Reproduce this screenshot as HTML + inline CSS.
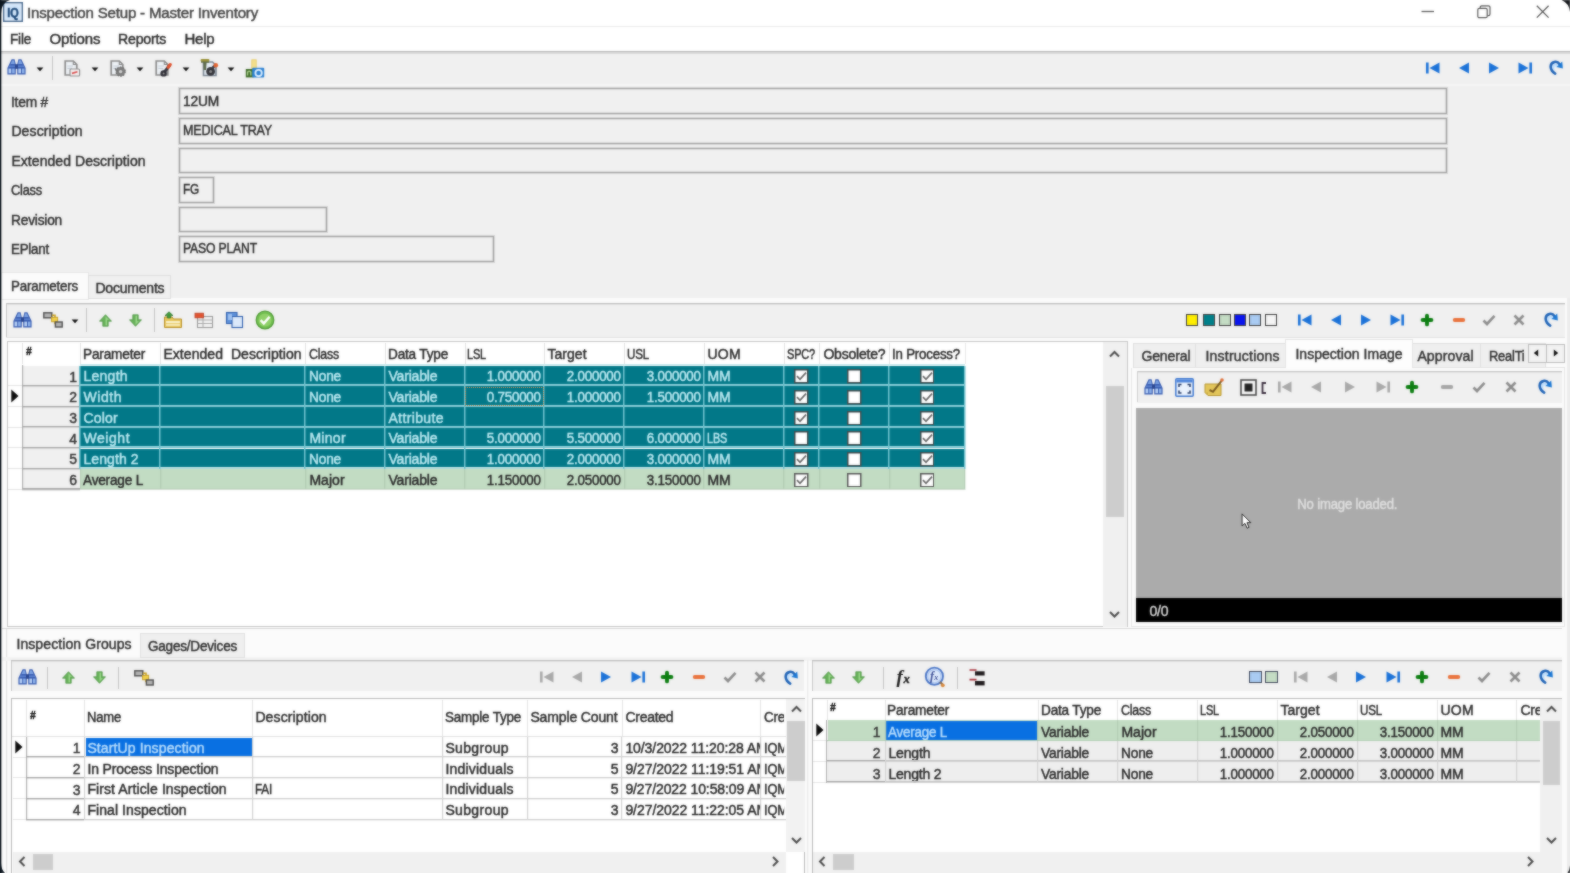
<!DOCTYPE html>
<html><head><meta charset="utf-8"><title>Inspection Setup - Master Inventory</title>
<style>
html,body{margin:0;padding:0;}
body{width:1570px;height:873px;overflow:hidden;background:#f0f0f0;font-family:"Liberation Sans", sans-serif;position:relative;}
#r{position:absolute;left:0;top:0;width:1570px;height:873px;overflow:hidden;will-change:transform;}
#f{left:0;top:0;width:1570px;height:873px;filter:url(#bl);}
#r div,#r span,#r svg{position:absolute;}
#r span{white-space:pre;-webkit-text-stroke:0.45px;}
</style></head><body>
<svg width="0" height="0" style="position:absolute"><filter id="bl" x="-2%" y="-2%" width="104%" height="104%" color-interpolation-filters="sRGB"><feGaussianBlur stdDeviation="0.8" result="b"/><feComposite in="b" in2="SourceGraphic" operator="arithmetic" k1="0" k2="0.55" k3="0.45" k4="0"/></filter></svg>
<div id="r"><div id="f">
<div style="left:-6px;top:-6px;width:1582px;height:885px;background:#f0f0f0;"></div>
<div style="left:-6px;top:-6px;width:1582px;height:57.5px;background:#ffffff;"></div>
<div style="left:-6px;top:26px;width:1582px;height:1px;background:#ebebeb;"></div>
<div style="left:-6px;top:51px;width:1582px;height:1px;background:#b8b8b8;"></div>
<div style="left:-6px;top:52px;width:1582px;height:1px;background:#b8b8b8;opacity:0.50;"></div>
<div style="left:-6px;top:53px;width:1582px;height:1px;background:#dcdcdc;"></div>
<div style="left:-6px;top:53.5px;width:1582px;height:31px;background:#f0f0f0;"></div>
<div style="left:-6px;top:84px;width:1582px;height:2px;background:#f6f6f6;"></div>
<svg style="left:2.5px;top:1.8px" width="20" height="20" viewBox="0 0 20 20"><rect x="0.8" y="0.8" width="18.4" height="18.4" fill="#d2e6fb" stroke="#4a6a8e" stroke-width="1.6"/><rect x="2" y="2" width="16" height="16" fill="none" stroke="#eaf3fd" stroke-width="0.8"/><text x="10" y="15.4" text-anchor="middle" font-family="Liberation Sans" font-weight="bold" font-size="13.5" fill="#1d4878" stroke="#1d4878" stroke-width="0.5" textLength="11.5" lengthAdjust="spacingAndGlyphs">IQ</text></svg>
<span style="left:27.40px;top:3.20px;font-size:15.5px;line-height:20px;color:#444;letter-spacing:-0.200px;transform:scaleX(0.9719);transform-origin:left center;">Inspection Setup - Master Inventory</span>
<svg style="left:1421px;top:5px" width="14" height="14" viewBox="0 0 14 14"><path d="M0.5 6.5 H13" stroke="#5c5c5c" stroke-width="1.3"/></svg>
<svg style="left:1477px;top:5px" width="14" height="14" viewBox="0 0 14 14"><rect x="0.8" y="3.3" width="9.4" height="9.4" rx="1.5" fill="none" stroke="#5c5c5c" stroke-width="1.2"/><path d="M3.2 3.2 V2.4 a1.6 1.6 0 0 1 1.6 -1.6 H11.4 a1.6 1.6 0 0 1 1.6 1.6 V9 a1.6 1.6 0 0 1 -1.6 1.6 H10.4" fill="none" stroke="#5c5c5c" stroke-width="1.2"/></svg>
<svg style="left:1536px;top:5px" width="14" height="14" viewBox="0 0 14 14"><path d="M0.8 0.8 L12.6 12.6 M12.6 0.8 L0.8 12.6" stroke="#5c5c5c" stroke-width="1.3"/></svg>
<span style="left:10.40px;top:28.60px;font-size:15px;line-height:20px;color:#2e2e2e;letter-spacing:-0.200px;transform:scaleX(0.8994);transform-origin:left center;">File</span>
<span style="left:49.40px;top:28.60px;font-size:15px;line-height:20px;color:#2e2e2e;letter-spacing:-0.084px;">Options</span>
<span style="left:118.40px;top:28.60px;font-size:15px;line-height:20px;color:#2e2e2e;letter-spacing:-0.200px;transform:scaleX(0.9390);transform-origin:left center;">Reports</span>
<span style="left:184.40px;top:28.60px;font-size:15px;line-height:20px;color:#2e2e2e;letter-spacing:-0.220px;">Help</span>
<svg style="left:7.0px;top:58.5px" width="19" height="16" viewBox="0 0 19 16"><path d="M4.6 0.3 H7.6 L8.8 5.5 V15.6 H0.4 V9 Z" fill="#3a5eb2"/><path d="M11.4 0.3 H14.4 L18.6 9 V15.6 H10.2 V5.5 Z" fill="#3a5eb2"/><rect x="8" y="5.2" width="3" height="4.6" fill="#2a4690"/><path d="M5.2 1.4 H7 L7.7 5 H3.7 Z M12 1.4 H13.8 L15.4 5 H11.3 Z" fill="#7da4e4"/><rect x="1.6" y="9.6" width="2.6" height="4.6" fill="#b9d3f7"/><rect x="5.2" y="9.6" width="2.4" height="4.6" fill="#8fb4ec"/><rect x="11.4" y="9.6" width="2.6" height="4.6" fill="#b9d3f7"/><rect x="15" y="9.6" width="2.4" height="4.6" fill="#8fb4ec"/><path d="M2.6 6.6 H8 V8 H2 Z M11 6.6 H16.4 L17 8 H11 Z" fill="#5b82cf"/></svg>
<svg style="left:35.6px;top:67.2px" width="8" height="5" viewBox="0 0 8 5"><path d="M0.6 0.4 H7.4 L4 4.3 Z" fill="#111"/></svg>
<div style="left:52px;top:56.0px;width:1px;height:24px;background:#c4c4c4;"></div>
<svg style="left:64px;top:60.0px" width="17" height="17" viewBox="0 0 17 17"><path d="M1.2 1 H9.3 L12.8 4.5 V15 H1.2 Z" fill="#eef2f6" stroke="#8b8b8b" stroke-width="1.7"/><path d="M9.3 1 V4.5 H12.8" fill="none" stroke="#8b8b8b" stroke-width="1.1"/><path d="M3.4 6 H9 M3.4 8.4 H8" stroke="#c3ccd6" stroke-width="1.1"/><rect x="6" y="9" width="9.6" height="7" rx="1" fill="#f6f2f2" stroke="#8f8f8f" stroke-width="1.2"/><path d="M8 13.4 L13.4 11.8" stroke="#d84a4a" stroke-width="1.7"/></svg>
<svg style="left:91px;top:67.2px" width="8" height="5" viewBox="0 0 8 5"><path d="M0.6 0.4 H7.4 L4 4.3 Z" fill="#111"/></svg>
<svg style="left:109.5px;top:60.0px" width="17" height="17" viewBox="0 0 17 17"><path d="M1.2 1 H9.3 L12.8 4.5 V15 H1.2 Z" fill="#eef2f6" stroke="#8b8b8b" stroke-width="1.7"/><path d="M9.3 1 V4.5 H12.8" fill="none" stroke="#8b8b8b" stroke-width="1.1"/><path d="M3.4 6 H9 M3.4 8.4 H8" stroke="#c3ccd6" stroke-width="1.1"/><circle cx="10.6" cy="11.6" r="4.6" fill="#7c7c7c"/><circle cx="10.6" cy="11.6" r="4.6" fill="none" stroke="#6a6a6a" stroke-width="1.2" stroke-dasharray="1.6 1.3"/><circle cx="10.6" cy="11.6" r="1.7" fill="#d4d4d4"/><path d="M5 8.5 L8 11.5" stroke="#6f6f6f" stroke-width="1.5"/></svg>
<svg style="left:136px;top:67.2px" width="8" height="5" viewBox="0 0 8 5"><path d="M0.6 0.4 H7.4 L4 4.3 Z" fill="#111"/></svg>
<svg style="left:155px;top:60.0px" width="17" height="17" viewBox="0 0 17 17"><path d="M1.2 1 H9.3 L12.8 4.5 V15 H1.2 Z" fill="#eef2f6" stroke="#8b8b8b" stroke-width="1.7"/><path d="M9.3 1 V4.5 H12.8" fill="none" stroke="#8b8b8b" stroke-width="1.1"/><path d="M3.4 6 H9 M3.4 8.4 H8" stroke="#c3ccd6" stroke-width="1.1"/><path d="M8.2 13.6 L14.6 5.4" stroke="#33333d" stroke-width="3"/><circle cx="8.6" cy="13.4" r="3.2" fill="#2c2c34"/><circle cx="8.6" cy="13.4" r="1" fill="#999"/><path d="M13.2 7.2 L15.2 4.6" stroke="#e0502c" stroke-width="3.2" stroke-linecap="round"/></svg>
<svg style="left:182px;top:67.2px" width="8" height="5" viewBox="0 0 8 5"><path d="M0.6 0.4 H7.4 L4 4.3 Z" fill="#111"/></svg>
<svg style="left:199px;top:58px" width="21" height="20" viewBox="0 0 21 20"><path d="M4.5 4 H13.5 L17 7.5 V17.5 H4.5 Z" fill="#e6eef6" stroke="#7d8894" stroke-width="1.6"/><path d="M2 2.2 H10 V4.8 H7.6 L7 12 H4.6 L4.4 4.8 H2 Z" fill="#5d6b4a"/><rect x="1.6" y="1" width="8.8" height="2.4" rx="1" fill="#9a9136"/><circle cx="11.6" cy="13.4" r="4.4" fill="#34343a"/><circle cx="11.6" cy="13.4" r="1.5" fill="#8c8c8c"/><path d="M13.4 10.2 L16.4 6.8" stroke="#3a3a44" stroke-width="2.6"/><circle cx="16.8" cy="7.2" r="2.3" fill="#e2622f"/></svg>
<svg style="left:227px;top:67.2px" width="8" height="5" viewBox="0 0 8 5"><path d="M0.6 0.4 H7.4 L4 4.3 Z" fill="#111"/></svg>
<svg style="left:245px;top:59px" width="20" height="20" viewBox="0 0 20 20"><rect x="6.8" y="0.8" width="4.4" height="9.5" fill="#f3df8c" stroke="#e6cb62" stroke-width="0.8"/><rect x="0.8" y="10" width="7.6" height="8.4" fill="#3c6a26"/><path d="M2.6 16.6 V13 Q4.2 11.4 5.8 13 V16.6" stroke="#a8cc8a" stroke-width="1.4" fill="none"/><rect x="7.2" y="8.8" width="12" height="9.6" rx="1" fill="#2a80d2"/><circle cx="13.6" cy="14" r="3.2" fill="#2a80d2" stroke="#dff0ff" stroke-width="1.8"/></svg>
<svg style="left:1424.5px;top:61.5px" width="16" height="12" viewBox="0 0 16 12"><rect x="1" y="0.5" width="2.6" height="11" fill="#1b72d8"/><path d="M14.5 0.5 L4.5 6 L14.5 11.5 Z" fill="#1b72d8"/></svg>
<svg style="left:1458px;top:61.5px" width="12" height="12" viewBox="0 0 12 12"><path d="M11 0.5 L1 6 L11 11.5 Z" fill="#1b72d8"/></svg>
<svg style="left:1487.5px;top:61.5px" width="12" height="12" viewBox="0 0 12 12"><path d="M1 0.5 L11 6 L1 11.5 Z" fill="#1b72d8"/></svg>
<svg style="left:1517px;top:61.5px" width="16" height="12" viewBox="0 0 16 12"><rect x="12.4" y="0.5" width="2.6" height="11" fill="#1b72d8"/><path d="M1.5 0.5 L11.5 6 L1.5 11.5 Z" fill="#1b72d8"/></svg>
<svg style="left:1548px;top:59.5px" width="16" height="15" viewBox="0 0 16 15"><path d="M7 12.5 C3.5 10.5 3 5 6.5 3.6 C8.4 3 9.6 3.8 10.6 5.2 L9 8 L7.6 6.5 C6 7 6 10 7 12.5 Z" fill="#c3e2ff"/><path d="M7.2 13.6 C1.6 10.2 1 3.6 6.4 2 C8.6 1.5 10.4 2.4 11.6 4.2" stroke="#1f63b6" stroke-width="2.5" fill="none" stroke-linecap="round"/><path d="M8.6 6.9 L14.2 1.6 L14.9 8.6 Z" fill="#1b78d4"/></svg>
<span style="left:11.40px;top:91.50px;font-size:14px;line-height:20px;color:#303030;letter-spacing:-0.200px;transform:scaleX(0.9814);transform-origin:left center;">Item #</span>
<span style="left:11.40px;top:121.00px;font-size:14px;line-height:20px;color:#303030;letter-spacing:0.117px;">Description</span>
<span style="left:11.40px;top:150.50px;font-size:14px;line-height:20px;color:#303030;letter-spacing:0.059px;">Extended Description</span>
<span style="left:11.40px;top:180.00px;font-size:14px;line-height:20px;color:#303030;letter-spacing:-0.200px;transform:scaleX(0.9119);transform-origin:left center;">Class</span>
<span style="left:11.40px;top:209.50px;font-size:14px;line-height:20px;color:#303030;letter-spacing:-0.200px;transform:scaleX(0.9789);transform-origin:left center;">Revision</span>
<span style="left:11.40px;top:239.00px;font-size:14px;line-height:20px;color:#303030;letter-spacing:-0.200px;transform:scaleX(0.9491);transform-origin:left center;">EPlant</span>
<div style="left:179px;top:88px;width:1268px;height:26px;background:#f0f0f0;box-sizing:border-box;border:1px solid #a2a2a2;box-shadow:0 0 0 1px #d6d6d6, inset 0 0 0 0.6px #c9c9c9;"></div>
<div style="left:179px;top:118px;width:1268px;height:25.5px;background:#f0f0f0;box-sizing:border-box;border:1px solid #a2a2a2;box-shadow:0 0 0 1px #d6d6d6, inset 0 0 0 0.6px #c9c9c9;"></div>
<div style="left:179px;top:147.5px;width:1268px;height:25.5px;background:#f0f0f0;box-sizing:border-box;border:1px solid #a2a2a2;box-shadow:0 0 0 1px #d6d6d6, inset 0 0 0 0.6px #c9c9c9;"></div>
<div style="left:179px;top:177px;width:34.5px;height:25.5px;background:#f0f0f0;box-sizing:border-box;border:1px solid #a2a2a2;box-shadow:0 0 0 1px #d6d6d6, inset 0 0 0 0.6px #c9c9c9;"></div>
<div style="left:179px;top:206.5px;width:147.5px;height:25.5px;background:#f0f0f0;box-sizing:border-box;border:1px solid #a2a2a2;box-shadow:0 0 0 1px #d6d6d6, inset 0 0 0 0.6px #c9c9c9;"></div>
<div style="left:179px;top:236px;width:314.5px;height:25.5px;background:#f0f0f0;box-sizing:border-box;border:1px solid #a2a2a2;box-shadow:0 0 0 1px #d6d6d6, inset 0 0 0 0.6px #c9c9c9;"></div>
<span style="left:183.40px;top:90.50px;font-size:14px;line-height:20px;color:#2e2e2e;letter-spacing:-0.200px;transform:scaleX(0.9848);transform-origin:left center;">12UM</span>
<span style="left:183.40px;top:120.00px;font-size:14px;line-height:20px;color:#2e2e2e;letter-spacing:-0.200px;transform:scaleX(0.8969);transform-origin:left center;">MEDICAL TRAY</span>
<span style="left:183.40px;top:179.00px;font-size:14px;line-height:20px;color:#2e2e2e;letter-spacing:-0.200px;transform:scaleX(0.8414);transform-origin:left center;">FG</span>
<span style="left:183.40px;top:238.00px;font-size:14px;line-height:20px;color:#2e2e2e;letter-spacing:-0.200px;transform:scaleX(0.8720);transform-origin:left center;">PASO PLANT</span>
<div style="left:2px;top:298px;width:1566px;height:331px;background:#fbfbfb;"></div>
<div style="left:2px;top:273px;width:86px;height:26px;background:#fbfbfb;box-shadow:0 0 0 1px #e6e6e6;"></div>
<div style="left:89px;top:276px;width:81px;height:22px;background:#f0f0f0;box-shadow:0 0 0 1px #dedede;"></div>
<span style="left:11.40px;top:276.00px;font-size:14px;line-height:20px;color:#303030;letter-spacing:-0.200px;transform:scaleX(0.9524);transform-origin:left center;">Parameters</span>
<span style="left:95.40px;top:278.00px;font-size:14px;line-height:20px;color:#303030;letter-spacing:-0.202px;">Documents</span>
<div style="left:6px;top:303px;width:1558.5px;height:34.5px;background:#f0f0f0;"></div>
<div style="left:6px;top:303px;width:1558.5px;height:1px;background:#bdbdbd;"></div>
<div style="left:6px;top:304px;width:1558.5px;height:1px;background:#bdbdbd;opacity:0.30;"></div>
<div style="left:6px;top:303px;width:1px;height:34px;background:#c4c4c4;"></div>
<div style="left:6px;top:337px;width:1558.5px;height:1px;background:#e2e2e2;"></div>
<svg style="left:13.0px;top:311.5px" width="19" height="16" viewBox="0 0 19 16"><path d="M4.6 0.3 H7.6 L8.8 5.5 V15.6 H0.4 V9 Z" fill="#3a5eb2"/><path d="M11.4 0.3 H14.4 L18.6 9 V15.6 H10.2 V5.5 Z" fill="#3a5eb2"/><rect x="8" y="5.2" width="3" height="4.6" fill="#2a4690"/><path d="M5.2 1.4 H7 L7.7 5 H3.7 Z M12 1.4 H13.8 L15.4 5 H11.3 Z" fill="#7da4e4"/><rect x="1.6" y="9.6" width="2.6" height="4.6" fill="#b9d3f7"/><rect x="5.2" y="9.6" width="2.4" height="4.6" fill="#8fb4ec"/><rect x="11.4" y="9.6" width="2.6" height="4.6" fill="#b9d3f7"/><rect x="15" y="9.6" width="2.4" height="4.6" fill="#8fb4ec"/><path d="M2.6 6.6 H8 V8 H2 Z M11 6.6 H16.4 L17 8 H11 Z" fill="#5b82cf"/></svg>
<svg style="left:42.5px;top:312px" width="20" height="16" viewBox="0 0 20 16"><rect x="0.8" y="0.8" width="8" height="5" fill="#b5b5b5" stroke="#4f4f4f" stroke-width="1.4"/><path d="M9 3.3 H12 V11.4 H13.5 M12 6.5 H13" stroke="#c9a227" stroke-width="1.6" fill="none"/><rect x="8.6" y="5.3" width="6" height="4.4" fill="#f3d24a" stroke="#c9a227" stroke-width="1"/><rect x="12.4" y="10" width="6.8" height="5" fill="#b5b5b5" stroke="#4f4f4f" stroke-width="1.4"/></svg>
<svg style="left:71px;top:319px" width="8" height="5" viewBox="0 0 8 5"><path d="M0.6 0.4 H7.4 L4 4.3 Z" fill="#111"/></svg>
<div style="left:86px;top:308.0px;width:1px;height:24px;background:#c4c4c4;"></div>
<svg style="left:98.5px;top:313.5px" width="13" height="13" viewBox="0 0 13 13"><path d="M6.5 0.7 L12.5 7.2 H9.2 V12.2 H3.8 V7.2 H0.5 Z" fill="#66b058" stroke="#468f3d" stroke-width="0.7"/><path d="M6.5 2.4 L9.8 5.8 H8 V11.3 H6.5 Z" fill="#9ad88a"/></svg>
<svg style="left:129.0px;top:313.5px" width="13" height="13" viewBox="0 0 13 13"><path d="M6.5 12.3 L12.5 5.8 H9.2 V0.8 H3.8 V5.8 H0.5 Z" fill="#66b058" stroke="#468f3d" stroke-width="0.7"/><path d="M6.5 10.6 L9.8 7.2 H8 V1.7 H6.5 Z" fill="#9ad88a"/></svg>
<div style="left:154px;top:308.0px;width:1px;height:24px;background:#c4c4c4;"></div>
<svg style="left:163px;top:311px" width="20" height="18" viewBox="0 0 20 18"><path d="M1.5 6 H9 L10.5 8 H18.5 V16.5 H1.5 Z" fill="#e8c65a" stroke="#b8902a" stroke-width="1"/><rect x="3" y="10" width="14" height="2.2" fill="#f8f0c8"/><rect x="3" y="13.2" width="14" height="1.6" fill="#f8f0c8"/><path d="M6 0.8 L10 4.6 H7.6 V7 H4.4 V4.6 H2 Z" fill="#3f9a3a" stroke="#2a6f28" stroke-width="0.7"/></svg>
<svg style="left:194px;top:311px" width="20" height="18" viewBox="0 0 20 18"><rect x="3.5" y="5.5" width="15" height="11" fill="#f4f4f4" stroke="#9a9a9a" stroke-width="1.1"/><path d="M3.5 9 H18.5 M3.5 12.5 H18.5 M9 5.5 V16.5" stroke="#a8a8a8" stroke-width="1"/><rect x="1" y="2.2" width="8.5" height="4.6" fill="#e2532f" stroke="#b93a1e" stroke-width="0.8"/></svg>
<svg style="left:225px;top:311px" width="20" height="18" viewBox="0 0 20 18"><rect x="1.5" y="1.5" width="10.5" height="11" fill="#5f93dc" stroke="#2f5fae" stroke-width="1.1"/><rect x="7" y="5.5" width="10.5" height="11" fill="#dce9fa" stroke="#2f5fae" stroke-width="1.1"/><rect x="3" y="3" width="4" height="6" fill="#9dc0f0"/></svg>
<svg style="left:255px;top:310px" width="20" height="20" viewBox="0 0 20 20"><circle cx="10" cy="10" r="8.8" fill="#6fbf4d" stroke="#4e9a33" stroke-width="1.2"/><circle cx="10" cy="10" r="6.6" fill="#8fd068"/><path d="M5.6 10.2 L8.8 13.4 L14.6 6.8" stroke="#fff" stroke-width="2.4" fill="none"/></svg>
<div style="left:1186px;top:314px;width:12px;height:12px;background:#ffee00;box-sizing:border-box;border:1.4px solid #3d3d3d;"></div>
<div style="left:1202.5px;top:314px;width:12px;height:12px;background:#00808a;box-sizing:border-box;border:1.4px solid #3d3d3d;"></div>
<div style="left:1218.5px;top:314px;width:12px;height:12px;background:#c4dcc4;box-sizing:border-box;border:1.4px solid #3d3d3d;"></div>
<div style="left:1233.5px;top:314px;width:12px;height:12px;background:#0a14ee;box-sizing:border-box;border:1.4px solid #3d3d3d;"></div>
<div style="left:1249px;top:314px;width:12px;height:12px;background:#a9cbf2;box-sizing:border-box;border:1.4px solid #3d3d3d;"></div>
<div style="left:1265px;top:314px;width:12px;height:12px;background:#f4f4f4;box-sizing:border-box;border:1.4px solid #3d3d3d;"></div>
<svg style="left:1297px;top:313.5px" width="16" height="12" viewBox="0 0 16 12"><rect x="1" y="0.5" width="2.6" height="11" fill="#1b72d8"/><path d="M14.5 0.5 L4.5 6 L14.5 11.5 Z" fill="#1b72d8"/></svg>
<svg style="left:1330px;top:313.5px" width="12" height="12" viewBox="0 0 12 12"><path d="M11 0.5 L1 6 L11 11.5 Z" fill="#1b72d8"/></svg>
<svg style="left:1359.5px;top:313.5px" width="12" height="12" viewBox="0 0 12 12"><path d="M1 0.5 L11 6 L1 11.5 Z" fill="#1b72d8"/></svg>
<svg style="left:1389px;top:313.5px" width="16" height="12" viewBox="0 0 16 12"><rect x="12.4" y="0.5" width="2.6" height="11" fill="#1b72d8"/><path d="M1.5 0.5 L11.5 6 L1.5 11.5 Z" fill="#1b72d8"/></svg>
<svg style="left:1420px;top:312.5px" width="14" height="14" viewBox="0 0 14 14"><path d="M7 2.6 V11.4 M2.6 7 H11.4" stroke="#0b7d10" stroke-width="3.9" stroke-linecap="round" fill="none"/></svg>
<svg style="left:1451px;top:316.5px" width="16" height="6" viewBox="0 0 16 6"><path d="M3.7 3 H12.3" stroke="#e9723c" stroke-width="3.8" stroke-linecap="round" fill="none"/></svg>
<svg style="left:1482px;top:313.5px" width="14" height="12" viewBox="0 0 14 12"><path d="M1.5 6.5 L5 10 L12.5 1.8" stroke="#8d8d8d" stroke-width="2.6" fill="none" stroke-linejoin="miter"/></svg>
<svg style="left:1513px;top:313.5px" width="12" height="12" viewBox="0 0 12 12"><path d="M1.5 1.5 L10.5 10.5 M10.5 1.5 L1.5 10.5" stroke="#8d8d8d" stroke-width="2.6" fill="none"/></svg>
<svg style="left:1543px;top:312.0px" width="16" height="15" viewBox="0 0 16 15"><path d="M7 12.5 C3.5 10.5 3 5 6.5 3.6 C8.4 3 9.6 3.8 10.6 5.2 L9 8 L7.6 6.5 C6 7 6 10 7 12.5 Z" fill="#c3e2ff"/><path d="M7.2 13.6 C1.6 10.2 1 3.6 6.4 2 C8.6 1.5 10.4 2.4 11.6 4.2" stroke="#1f63b6" stroke-width="2.5" fill="none" stroke-linecap="round"/><path d="M8.6 6.9 L14.2 1.6 L14.9 8.6 Z" fill="#1b78d4"/></svg>
<div style="left:6.5px;top:340.5px;width:1121.2px;height:286.5px;background:#ffffff;box-sizing:border-box;border:1.3px solid #c6c6c6;"></div>
<div style="left:22px;top:343px;width:1px;height:21px;background:#e1e1e1;"></div>
<div style="left:80px;top:343px;width:1px;height:21px;background:#e1e1e1;"></div>
<div style="left:160px;top:343px;width:1px;height:21px;background:#e1e1e1;"></div>
<div style="left:305px;top:343px;width:1px;height:21px;background:#e1e1e1;"></div>
<div style="left:385px;top:343px;width:1px;height:21px;background:#e1e1e1;"></div>
<div style="left:465px;top:343px;width:1px;height:21px;background:#e1e1e1;"></div>
<div style="left:544px;top:343px;width:1px;height:21px;background:#e1e1e1;"></div>
<div style="left:624px;top:343px;width:1px;height:21px;background:#e1e1e1;"></div>
<div style="left:704px;top:343px;width:1px;height:21px;background:#e1e1e1;"></div>
<div style="left:784px;top:343px;width:1px;height:21px;background:#e1e1e1;"></div>
<div style="left:819px;top:343px;width:1px;height:21px;background:#e1e1e1;"></div>
<div style="left:889px;top:343px;width:1px;height:21px;background:#e1e1e1;"></div>
<div style="left:965px;top:343px;width:1px;height:21px;background:#e8e8e8;"></div>
<span style="left:26.00px;top:342.30px;font-size:10px;line-height:20px;color:#1c1c1c;font-weight:bold;font-style:italic;">#</span>
<span style="left:83.40px;top:343.50px;font-size:14px;line-height:20px;color:#2c2c2c;letter-spacing:-0.200px;transform:scaleX(0.9755);transform-origin:left center;">Parameter</span>
<span style="left:163.40px;top:343.50px;font-size:14px;line-height:20px;color:#2c2c2c;letter-spacing:0.062px;">Extended  Description</span>
<span style="left:309.40px;top:343.50px;font-size:14px;line-height:20px;color:#2c2c2c;letter-spacing:-0.200px;transform:scaleX(0.8826);transform-origin:left center;">Class</span>
<span style="left:388.40px;top:343.50px;font-size:14px;line-height:20px;color:#2c2c2c;letter-spacing:-0.200px;transform:scaleX(0.9716);transform-origin:left center;">Data Type</span>
<span style="left:467.40px;top:343.50px;font-size:14px;line-height:20px;color:#2c2c2c;letter-spacing:-0.200px;transform:scaleX(0.7830);transform-origin:left center;">LSL</span>
<span style="left:547.40px;top:343.50px;font-size:14px;line-height:20px;color:#2c2c2c;letter-spacing:0.056px;">Target</span>
<span style="left:627.40px;top:343.50px;font-size:14px;line-height:20px;color:#2c2c2c;letter-spacing:-0.200px;transform:scaleX(0.8273);transform-origin:left center;">USL</span>
<span style="left:707.40px;top:343.50px;font-size:14px;line-height:20px;color:#2c2c2c;letter-spacing:0.264px;">UOM</span>
<span style="left:787.40px;top:343.50px;font-size:14px;line-height:20px;color:#2c2c2c;letter-spacing:-0.200px;transform:scaleX(0.7838);transform-origin:left center;">SPC?</span>
<span style="left:823.40px;top:343.50px;font-size:14px;line-height:20px;color:#2c2c2c;letter-spacing:-0.204px;">Obsolete?</span>
<span style="left:892.40px;top:343.50px;font-size:14px;line-height:20px;color:#2c2c2c;letter-spacing:-0.200px;transform:scaleX(0.9480);transform-origin:left center;">In Process?</span>
<div style="left:22px;top:365.7px;width:58px;height:124.19999999999999px;background:#f0f0f0;"></div>
<div style="left:22px;top:365.2px;width:1px;height:124.99999999999999px;background:#b0b0b0;"></div>
<div style="left:23px;top:365.2px;width:1px;height:124.99999999999999px;background:#b0b0b0;opacity:0.20;"></div>
<div style="left:80px;top:365.7px;width:884.5px;height:20.7px;background:#027888;"></div>
<span style="left:69.20px;top:366.65px;font-size:14px;line-height:20px;color:#333;">1</span>
<div style="left:22px;top:385px;width:58px;height:1px;background:#a6a6a6;"></div>
<div style="left:22px;top:386px;width:58px;height:1px;background:#a6a6a6;opacity:0.40;"></div>
<div style="left:8px;top:385px;width:14px;height:1px;background:#e4e4e4;"></div>
<span style="left:83.40px;top:366.35px;font-size:14px;line-height:20px;color:#bdeaf2;letter-spacing:0.274px;">Length</span>
<span style="left:309.40px;top:366.35px;font-size:14px;line-height:20px;color:#bdeaf2;letter-spacing:-0.200px;transform:scaleX(0.9797);transform-origin:left center;">None</span>
<span style="left:388.40px;top:366.35px;font-size:14px;line-height:20px;color:#bdeaf2;letter-spacing:-0.161px;">Variable</span>
<span style="left:484.09px;top:366.35px;font-size:14px;line-height:20px;color:#bdeaf2;letter-spacing:-0.200px;transform:scaleX(0.9508);transform-origin:right center;">1.000000</span>
<span style="left:563.59px;top:366.35px;font-size:14px;line-height:20px;color:#bdeaf2;letter-spacing:-0.200px;transform:scaleX(0.9508);transform-origin:right center;">2.000000</span>
<span style="left:643.59px;top:366.35px;font-size:14px;line-height:20px;color:#bdeaf2;letter-spacing:-0.200px;transform:scaleX(0.9508);transform-origin:right center;">3.000000</span>
<span style="left:707.40px;top:366.35px;font-size:14px;line-height:20px;color:#bdeaf2;letter-spacing:-0.128px;">MM</span>
<svg style="left:794.25px;top:369.3px" width="14.5" height="14.5" viewBox="0 0 14.5 14.5"><rect x="0.75" y="0.75" width="13" height="13" fill="#fff" stroke="#3f4a4c" stroke-width="1.5"/><path d="M3 7.2 L6 10.3 L12 3.6" stroke="#666" stroke-width="1.7" fill="none"/></svg>
<svg style="left:847.25px;top:369.3px" width="14.5" height="14.5" viewBox="0 0 14.5 14.5"><rect x="0.75" y="0.75" width="13" height="13" fill="#fff" stroke="#3f4a4c" stroke-width="1.5"/></svg>
<svg style="left:919.75px;top:369.3px" width="14.5" height="14.5" viewBox="0 0 14.5 14.5"><rect x="0.75" y="0.75" width="13" height="13" fill="#fff" stroke="#3f4a4c" stroke-width="1.5"/><path d="M3 7.2 L6 10.3 L12 3.6" stroke="#666" stroke-width="1.7" fill="none"/></svg>
<div style="left:80px;top:384px;width:884.5px;height:1px;background:#8fd2dc;"></div>
<div style="left:80px;top:385px;width:884.5px;height:1px;background:#8fd2dc;opacity:0.90;"></div>
<div style="left:80px;top:386.4px;width:884.5px;height:20.7px;background:#027888;"></div>
<span style="left:69.20px;top:387.35px;font-size:14px;line-height:20px;color:#333;">2</span>
<div style="left:22px;top:406px;width:58px;height:1px;background:#a6a6a6;"></div>
<div style="left:22px;top:407px;width:58px;height:1px;background:#a6a6a6;opacity:0.40;"></div>
<div style="left:8px;top:406px;width:14px;height:1px;background:#e4e4e4;"></div>
<span style="left:83.40px;top:387.05px;font-size:14px;line-height:20px;color:#bdeaf2;letter-spacing:0.601px;">Width</span>
<span style="left:309.40px;top:387.05px;font-size:14px;line-height:20px;color:#bdeaf2;letter-spacing:-0.200px;transform:scaleX(0.9797);transform-origin:left center;">None</span>
<span style="left:388.40px;top:387.05px;font-size:14px;line-height:20px;color:#bdeaf2;letter-spacing:-0.161px;">Variable</span>
<span style="left:484.09px;top:387.05px;font-size:14px;line-height:20px;color:#bdeaf2;letter-spacing:-0.200px;transform:scaleX(0.9508);transform-origin:right center;">0.750000</span>
<span style="left:563.59px;top:387.05px;font-size:14px;line-height:20px;color:#bdeaf2;letter-spacing:-0.200px;transform:scaleX(0.9508);transform-origin:right center;">1.000000</span>
<span style="left:643.59px;top:387.05px;font-size:14px;line-height:20px;color:#bdeaf2;letter-spacing:-0.200px;transform:scaleX(0.9508);transform-origin:right center;">1.500000</span>
<span style="left:707.40px;top:387.05px;font-size:14px;line-height:20px;color:#bdeaf2;letter-spacing:-0.128px;">MM</span>
<svg style="left:794.25px;top:390.0px" width="14.5" height="14.5" viewBox="0 0 14.5 14.5"><rect x="0.75" y="0.75" width="13" height="13" fill="#fff" stroke="#3f4a4c" stroke-width="1.5"/><path d="M3 7.2 L6 10.3 L12 3.6" stroke="#666" stroke-width="1.7" fill="none"/></svg>
<svg style="left:847.25px;top:390.0px" width="14.5" height="14.5" viewBox="0 0 14.5 14.5"><rect x="0.75" y="0.75" width="13" height="13" fill="#fff" stroke="#3f4a4c" stroke-width="1.5"/></svg>
<svg style="left:919.75px;top:390.0px" width="14.5" height="14.5" viewBox="0 0 14.5 14.5"><rect x="0.75" y="0.75" width="13" height="13" fill="#fff" stroke="#3f4a4c" stroke-width="1.5"/><path d="M3 7.2 L6 10.3 L12 3.6" stroke="#666" stroke-width="1.7" fill="none"/></svg>
<div style="left:80px;top:405px;width:884.5px;height:1px;background:#8fd2dc;"></div>
<div style="left:80px;top:406px;width:884.5px;height:1px;background:#8fd2dc;opacity:0.90;"></div>
<div style="left:80px;top:407.09999999999997px;width:884.5px;height:20.7px;background:#027888;"></div>
<span style="left:69.20px;top:408.05px;font-size:14px;line-height:20px;color:#333;">3</span>
<div style="left:22px;top:426px;width:58px;height:1px;background:#a6a6a6;"></div>
<div style="left:22px;top:427px;width:58px;height:1px;background:#a6a6a6;opacity:0.40;"></div>
<div style="left:8px;top:427px;width:14px;height:1px;background:#e4e4e4;"></div>
<span style="left:83.40px;top:407.75px;font-size:14px;line-height:20px;color:#bdeaf2;letter-spacing:0.183px;">Color</span>
<span style="left:388.40px;top:407.75px;font-size:14px;line-height:20px;color:#bdeaf2;letter-spacing:0.382px;">Attribute</span>
<svg style="left:794.25px;top:410.7px" width="14.5" height="14.5" viewBox="0 0 14.5 14.5"><rect x="0.75" y="0.75" width="13" height="13" fill="#fff" stroke="#3f4a4c" stroke-width="1.5"/><path d="M3 7.2 L6 10.3 L12 3.6" stroke="#666" stroke-width="1.7" fill="none"/></svg>
<svg style="left:847.25px;top:410.7px" width="14.5" height="14.5" viewBox="0 0 14.5 14.5"><rect x="0.75" y="0.75" width="13" height="13" fill="#fff" stroke="#3f4a4c" stroke-width="1.5"/></svg>
<svg style="left:919.75px;top:410.7px" width="14.5" height="14.5" viewBox="0 0 14.5 14.5"><rect x="0.75" y="0.75" width="13" height="13" fill="#fff" stroke="#3f4a4c" stroke-width="1.5"/><path d="M3 7.2 L6 10.3 L12 3.6" stroke="#666" stroke-width="1.7" fill="none"/></svg>
<div style="left:80px;top:426px;width:884.5px;height:1px;background:#8fd2dc;"></div>
<div style="left:80px;top:427px;width:884.5px;height:1px;background:#8fd2dc;opacity:0.90;"></div>
<div style="left:80px;top:427.79999999999995px;width:884.5px;height:20.7px;background:#027888;"></div>
<span style="left:69.20px;top:428.75px;font-size:14px;line-height:20px;color:#333;">4</span>
<div style="left:22px;top:447px;width:58px;height:1px;background:#a6a6a6;"></div>
<div style="left:22px;top:448px;width:58px;height:1px;background:#a6a6a6;opacity:0.40;"></div>
<div style="left:8px;top:447px;width:14px;height:1px;background:#e4e4e4;"></div>
<span style="left:83.40px;top:428.45px;font-size:14px;line-height:20px;color:#bdeaf2;letter-spacing:0.574px;">Weight</span>
<span style="left:309.40px;top:428.45px;font-size:14px;line-height:20px;color:#bdeaf2;letter-spacing:0.296px;">Minor</span>
<span style="left:388.40px;top:428.45px;font-size:14px;line-height:20px;color:#bdeaf2;letter-spacing:-0.161px;">Variable</span>
<span style="left:484.09px;top:428.45px;font-size:14px;line-height:20px;color:#bdeaf2;letter-spacing:-0.200px;transform:scaleX(0.9508);transform-origin:right center;">5.000000</span>
<span style="left:563.59px;top:428.45px;font-size:14px;line-height:20px;color:#bdeaf2;letter-spacing:-0.200px;transform:scaleX(0.9508);transform-origin:right center;">5.500000</span>
<span style="left:643.59px;top:428.45px;font-size:14px;line-height:20px;color:#bdeaf2;letter-spacing:-0.200px;transform:scaleX(0.9508);transform-origin:right center;">6.000000</span>
<span style="left:707.40px;top:428.45px;font-size:14px;line-height:20px;color:#bdeaf2;letter-spacing:-0.200px;transform:scaleX(0.7749);transform-origin:left center;">LBS</span>
<svg style="left:794.25px;top:431.4px" width="14.5" height="14.5" viewBox="0 0 14.5 14.5"><rect x="0.75" y="0.75" width="13" height="13" fill="#fff" stroke="#3f4a4c" stroke-width="1.5"/></svg>
<svg style="left:847.25px;top:431.4px" width="14.5" height="14.5" viewBox="0 0 14.5 14.5"><rect x="0.75" y="0.75" width="13" height="13" fill="#fff" stroke="#3f4a4c" stroke-width="1.5"/></svg>
<svg style="left:919.75px;top:431.4px" width="14.5" height="14.5" viewBox="0 0 14.5 14.5"><rect x="0.75" y="0.75" width="13" height="13" fill="#fff" stroke="#3f4a4c" stroke-width="1.5"/><path d="M3 7.2 L6 10.3 L12 3.6" stroke="#666" stroke-width="1.7" fill="none"/></svg>
<div style="left:80px;top:446px;width:884.5px;height:1px;background:#8fd2dc;"></div>
<div style="left:80px;top:447px;width:884.5px;height:1px;background:#8fd2dc;opacity:0.90;"></div>
<div style="left:80px;top:448.5px;width:884.5px;height:20.7px;background:#027888;"></div>
<span style="left:69.20px;top:449.45px;font-size:14px;line-height:20px;color:#333;">5</span>
<div style="left:22px;top:468px;width:58px;height:1px;background:#a6a6a6;"></div>
<div style="left:22px;top:469px;width:58px;height:1px;background:#a6a6a6;opacity:0.40;"></div>
<div style="left:8px;top:468px;width:14px;height:1px;background:#e4e4e4;"></div>
<span style="left:83.40px;top:449.15px;font-size:14px;line-height:20px;color:#bdeaf2;letter-spacing:0.100px;">Length 2</span>
<span style="left:309.40px;top:449.15px;font-size:14px;line-height:20px;color:#bdeaf2;letter-spacing:-0.200px;transform:scaleX(0.9797);transform-origin:left center;">None</span>
<span style="left:388.40px;top:449.15px;font-size:14px;line-height:20px;color:#bdeaf2;letter-spacing:-0.161px;">Variable</span>
<span style="left:484.09px;top:449.15px;font-size:14px;line-height:20px;color:#bdeaf2;letter-spacing:-0.200px;transform:scaleX(0.9508);transform-origin:right center;">1.000000</span>
<span style="left:563.59px;top:449.15px;font-size:14px;line-height:20px;color:#bdeaf2;letter-spacing:-0.200px;transform:scaleX(0.9508);transform-origin:right center;">2.000000</span>
<span style="left:643.59px;top:449.15px;font-size:14px;line-height:20px;color:#bdeaf2;letter-spacing:-0.200px;transform:scaleX(0.9508);transform-origin:right center;">3.000000</span>
<span style="left:707.40px;top:449.15px;font-size:14px;line-height:20px;color:#bdeaf2;letter-spacing:-0.128px;">MM</span>
<svg style="left:794.25px;top:452.1px" width="14.5" height="14.5" viewBox="0 0 14.5 14.5"><rect x="0.75" y="0.75" width="13" height="13" fill="#fff" stroke="#3f4a4c" stroke-width="1.5"/><path d="M3 7.2 L6 10.3 L12 3.6" stroke="#666" stroke-width="1.7" fill="none"/></svg>
<svg style="left:847.25px;top:452.1px" width="14.5" height="14.5" viewBox="0 0 14.5 14.5"><rect x="0.75" y="0.75" width="13" height="13" fill="#fff" stroke="#3f4a4c" stroke-width="1.5"/></svg>
<svg style="left:919.75px;top:452.1px" width="14.5" height="14.5" viewBox="0 0 14.5 14.5"><rect x="0.75" y="0.75" width="13" height="13" fill="#fff" stroke="#3f4a4c" stroke-width="1.5"/><path d="M3 7.2 L6 10.3 L12 3.6" stroke="#666" stroke-width="1.7" fill="none"/></svg>
<div style="left:80px;top:467px;width:884.5px;height:1px;background:#c4e6e6;"></div>
<div style="left:80px;top:468px;width:884.5px;height:1px;background:#c4e6e6;opacity:0.90;"></div>
<div style="left:80px;top:469.2px;width:884.5px;height:20.7px;background:#c2dcc3;"></div>
<span style="left:69.20px;top:470.15px;font-size:14px;line-height:20px;color:#333;">6</span>
<div style="left:22px;top:488px;width:58px;height:1px;background:#a6a6a6;"></div>
<div style="left:22px;top:489px;width:58px;height:1px;background:#a6a6a6;opacity:0.40;"></div>
<div style="left:8px;top:489px;width:14px;height:1px;background:#e4e4e4;"></div>
<span style="left:83.40px;top:469.85px;font-size:14px;line-height:20px;color:#2a2a2a;letter-spacing:-0.200px;transform:scaleX(0.9713);transform-origin:left center;">Average L</span>
<span style="left:309.40px;top:469.85px;font-size:14px;line-height:20px;color:#2a2a2a;letter-spacing:0.046px;">Major</span>
<span style="left:388.40px;top:469.85px;font-size:14px;line-height:20px;color:#2a2a2a;letter-spacing:-0.161px;">Variable</span>
<span style="left:484.09px;top:469.85px;font-size:14px;line-height:20px;color:#2a2a2a;letter-spacing:-0.200px;transform:scaleX(0.9508);transform-origin:right center;">1.150000</span>
<span style="left:563.59px;top:469.85px;font-size:14px;line-height:20px;color:#2a2a2a;letter-spacing:-0.200px;transform:scaleX(0.9508);transform-origin:right center;">2.050000</span>
<span style="left:643.59px;top:469.85px;font-size:14px;line-height:20px;color:#2a2a2a;letter-spacing:-0.200px;transform:scaleX(0.9508);transform-origin:right center;">3.150000</span>
<span style="left:707.40px;top:469.85px;font-size:14px;line-height:20px;color:#2a2a2a;letter-spacing:-0.128px;">MM</span>
<svg style="left:794.25px;top:472.8px" width="14.5" height="14.5" viewBox="0 0 14.5 14.5"><rect x="0.75" y="0.75" width="13" height="13" fill="#fff" stroke="#555" stroke-width="1.5"/><path d="M3 7.2 L6 10.3 L12 3.6" stroke="#666" stroke-width="1.7" fill="none"/></svg>
<svg style="left:847.25px;top:472.8px" width="14.5" height="14.5" viewBox="0 0 14.5 14.5"><rect x="0.75" y="0.75" width="13" height="13" fill="#fff" stroke="#555" stroke-width="1.5"/></svg>
<svg style="left:919.75px;top:472.8px" width="14.5" height="14.5" viewBox="0 0 14.5 14.5"><rect x="0.75" y="0.75" width="13" height="13" fill="#fff" stroke="#555" stroke-width="1.5"/><path d="M3 7.2 L6 10.3 L12 3.6" stroke="#666" stroke-width="1.7" fill="none"/></svg>
<div style="left:80px;top:488px;width:884.5px;height:1px;background:#b9d4ba;"></div>
<div style="left:80px;top:489px;width:884.5px;height:1px;background:#b9d4ba;opacity:0.90;"></div>
<div style="left:80px;top:364px;width:884.5px;height:1px;background:#c9ecf0;"></div>
<div style="left:80px;top:365px;width:884.5px;height:1px;background:#c9ecf0;opacity:0.40;"></div>
<div style="left:79px;top:365.7px;width:1px;height:103.5px;background:#74c4d0;"></div>
<div style="left:80px;top:365.7px;width:1px;height:103.5px;background:#74c4d0;opacity:0.50;"></div>
<div style="left:80px;top:469.2px;width:1px;height:20.7px;background:#b2ccb3;"></div>
<div style="left:81px;top:469.2px;width:1px;height:20.7px;background:#b2ccb3;opacity:0.30;"></div>
<div style="left:159px;top:365.7px;width:1px;height:103.5px;background:#74c4d0;"></div>
<div style="left:160px;top:365.7px;width:1px;height:103.5px;background:#74c4d0;opacity:0.50;"></div>
<div style="left:160px;top:469.2px;width:1px;height:20.7px;background:#b2ccb3;"></div>
<div style="left:161px;top:469.2px;width:1px;height:20.7px;background:#b2ccb3;opacity:0.30;"></div>
<div style="left:304px;top:365.7px;width:1px;height:103.5px;background:#74c4d0;"></div>
<div style="left:305px;top:365.7px;width:1px;height:103.5px;background:#74c4d0;opacity:0.50;"></div>
<div style="left:305px;top:469.2px;width:1px;height:20.7px;background:#b2ccb3;"></div>
<div style="left:306px;top:469.2px;width:1px;height:20.7px;background:#b2ccb3;opacity:0.30;"></div>
<div style="left:384px;top:365.7px;width:1px;height:103.5px;background:#74c4d0;"></div>
<div style="left:385px;top:365.7px;width:1px;height:103.5px;background:#74c4d0;opacity:0.50;"></div>
<div style="left:384px;top:469.2px;width:1px;height:20.7px;background:#b2ccb3;"></div>
<div style="left:385px;top:469.2px;width:1px;height:20.7px;background:#b2ccb3;opacity:0.30;"></div>
<div style="left:464px;top:365.7px;width:1px;height:103.5px;background:#74c4d0;"></div>
<div style="left:465px;top:365.7px;width:1px;height:103.5px;background:#74c4d0;opacity:0.50;"></div>
<div style="left:464px;top:469.2px;width:1px;height:20.7px;background:#b2ccb3;"></div>
<div style="left:465px;top:469.2px;width:1px;height:20.7px;background:#b2ccb3;opacity:0.30;"></div>
<div style="left:543px;top:365.7px;width:1px;height:103.5px;background:#74c4d0;"></div>
<div style="left:544px;top:365.7px;width:1px;height:103.5px;background:#74c4d0;opacity:0.50;"></div>
<div style="left:544px;top:469.2px;width:1px;height:20.7px;background:#b2ccb3;"></div>
<div style="left:545px;top:469.2px;width:1px;height:20.7px;background:#b2ccb3;opacity:0.30;"></div>
<div style="left:623px;top:365.7px;width:1px;height:103.5px;background:#74c4d0;"></div>
<div style="left:624px;top:365.7px;width:1px;height:103.5px;background:#74c4d0;opacity:0.50;"></div>
<div style="left:624px;top:469.2px;width:1px;height:20.7px;background:#b2ccb3;"></div>
<div style="left:625px;top:469.2px;width:1px;height:20.7px;background:#b2ccb3;opacity:0.30;"></div>
<div style="left:703px;top:365.7px;width:1px;height:103.5px;background:#74c4d0;"></div>
<div style="left:704px;top:365.7px;width:1px;height:103.5px;background:#74c4d0;opacity:0.50;"></div>
<div style="left:703px;top:469.2px;width:1px;height:20.7px;background:#b2ccb3;"></div>
<div style="left:704px;top:469.2px;width:1px;height:20.7px;background:#b2ccb3;opacity:0.30;"></div>
<div style="left:783px;top:365.7px;width:1px;height:103.5px;background:#74c4d0;"></div>
<div style="left:784px;top:365.7px;width:1px;height:103.5px;background:#74c4d0;opacity:0.50;"></div>
<div style="left:783px;top:469.2px;width:1px;height:20.7px;background:#b2ccb3;"></div>
<div style="left:784px;top:469.2px;width:1px;height:20.7px;background:#b2ccb3;opacity:0.30;"></div>
<div style="left:818px;top:365.7px;width:1px;height:103.5px;background:#74c4d0;"></div>
<div style="left:819px;top:365.7px;width:1px;height:103.5px;background:#74c4d0;opacity:0.50;"></div>
<div style="left:819px;top:469.2px;width:1px;height:20.7px;background:#b2ccb3;"></div>
<div style="left:820px;top:469.2px;width:1px;height:20.7px;background:#b2ccb3;opacity:0.30;"></div>
<div style="left:888px;top:365.7px;width:1px;height:103.5px;background:#74c4d0;"></div>
<div style="left:889px;top:365.7px;width:1px;height:103.5px;background:#74c4d0;opacity:0.50;"></div>
<div style="left:889px;top:469.2px;width:1px;height:20.7px;background:#b2ccb3;"></div>
<div style="left:890px;top:469.2px;width:1px;height:20.7px;background:#b2ccb3;opacity:0.30;"></div>
<div style="left:964px;top:365.7px;width:1px;height:103.5px;background:#74c4d0;"></div>
<div style="left:965px;top:365.7px;width:1px;height:103.5px;background:#74c4d0;opacity:0.50;"></div>
<div style="left:964px;top:469.2px;width:1px;height:20.7px;background:#b2ccb3;"></div>
<div style="left:965px;top:469.2px;width:1px;height:20.7px;background:#b2ccb3;opacity:0.30;"></div>
<div style="left:22px;top:489px;width:58px;height:1px;background:#b4b4b4;"></div>
<div style="left:22px;top:490px;width:58px;height:1px;background:#b4b4b4;opacity:0.30;"></div>
<div style="left:80px;top:489px;width:884.5px;height:1px;background:#d2dcd2;"></div>
<div style="left:464.8px;top:386.59999999999997px;width:79px;height:19.099999999999998px;box-sizing:border-box;border:1px dotted #c98a4a;"></div>
<svg style="left:11px;top:389.25px" width="8" height="14" viewBox="0 0 8 14"><path d="M0.3 0.5 L7.5 7 L0.3 13.5 Z" fill="#0c0c0c"/></svg>
<div style="left:1103px;top:342px;width:23.5px;height:284.5px;background:#f0f0f0;"></div>
<svg style="left:1109.3px;top:349.75px" width="11" height="8.5" viewBox="0 0 11 8.5"><path d="M1 6.5 L5.5 2 L10 6.5" stroke="#4d4d4d" stroke-width="2" fill="none"/></svg>
<svg style="left:1109.3px;top:610.35px" width="11" height="8.5" viewBox="0 0 11 8.5"><path d="M1 2 L5.5 6.5 L10 2" stroke="#4d4d4d" stroke-width="2" fill="none"/></svg>
<div style="left:1106px;top:385.5px;width:18px;height:131.5px;background:#cdcdcd;"></div>
<div style="left:1134px;top:343.5px;width:62px;height:23px;background:#efefef;box-shadow:0 0 0 1px #dfdfdf;"></div>
<span style="left:1141.40px;top:345.50px;font-size:14px;line-height:20px;color:#303030;letter-spacing:-0.102px;">General</span>
<div style="left:1196px;top:343.5px;width:90px;height:23px;background:#efefef;box-shadow:0 0 0 1px #dfdfdf;"></div>
<span style="left:1205.40px;top:345.50px;font-size:14px;line-height:20px;color:#303030;letter-spacing:0.237px;">Instructions</span>
<div style="left:1412px;top:343.5px;width:69px;height:23px;background:#efefef;box-shadow:0 0 0 1px #dfdfdf;"></div>
<span style="left:1417.40px;top:345.50px;font-size:14px;line-height:20px;color:#303030;letter-spacing:0.133px;">Approval</span>
<div style="left:1481px;top:343.5px;width:64px;height:23px;background:#efefef;box-shadow:0 0 0 1px #dfdfdf;"></div>
<span style="left:1489.40px;top:345.50px;font-size:14px;line-height:20px;color:#303030;letter-spacing:-0.200px;transform:scaleX(0.9174);transform-origin:left center;width:39px;overflow:hidden;">RealTime</span>
<div style="left:1286px;top:340px;width:126px;height:28px;background:#fdfdfd;box-shadow:0 0 0 1px #e4e4e4;"></div>
<span style="left:1295.40px;top:343.50px;font-size:14px;line-height:20px;color:#303030;letter-spacing:0.038px;">Inspection Image</span>
<div style="left:1131px;top:367.5px;width:434px;height:259.5px;background:#fbfbfb;box-sizing:border-box;border:1px solid #e6e6e6;border-top:none;"></div>
<div style="left:1134px;top:367px;width:152px;height:1px;background:#e2e2e2;"></div>
<div style="left:1412px;top:367px;width:153px;height:1px;background:#e2e2e2;"></div>
<div style="left:1527.5px;top:344px;width:37.5px;height:19px;background:#f2f2f2;box-sizing:border-box;border:1px solid #bcbcbc;"></div>
<div style="left:1546px;top:344px;width:1px;height:19px;background:#bcbcbc;"></div>
<svg style="left:1533px;top:348.5px" width="6" height="8" viewBox="0 0 6 8"><path d="M5.2 0.5 L0.8 4 L5.2 7.5 Z" fill="#111"/></svg>
<svg style="left:1552.5px;top:348.5px" width="6" height="8" viewBox="0 0 6 8"><path d="M0.8 0.5 L5.2 4 L0.8 7.5 Z" fill="#111"/></svg>
<div style="left:1136.5px;top:371px;width:425.5px;height:31.5px;background:#f0f0f0;"></div>
<div style="left:1136.5px;top:371px;width:425.5px;height:1px;background:#c6c6c6;"></div>
<div style="left:1136.5px;top:372px;width:425.5px;height:1px;background:#c6c6c6;opacity:0.30;"></div>
<div style="left:1137px;top:371px;width:1px;height:31px;background:#cfcfcf;"></div>
<svg style="left:1143.5px;top:378.5px" width="19" height="16" viewBox="0 0 19 16"><path d="M4.6 0.3 H7.6 L8.8 5.5 V15.6 H0.4 V9 Z" fill="#3a5eb2"/><path d="M11.4 0.3 H14.4 L18.6 9 V15.6 H10.2 V5.5 Z" fill="#3a5eb2"/><rect x="8" y="5.2" width="3" height="4.6" fill="#2a4690"/><path d="M5.2 1.4 H7 L7.7 5 H3.7 Z M12 1.4 H13.8 L15.4 5 H11.3 Z" fill="#7da4e4"/><rect x="1.6" y="9.6" width="2.6" height="4.6" fill="#b9d3f7"/><rect x="5.2" y="9.6" width="2.4" height="4.6" fill="#8fb4ec"/><rect x="11.4" y="9.6" width="2.6" height="4.6" fill="#b9d3f7"/><rect x="15" y="9.6" width="2.4" height="4.6" fill="#8fb4ec"/><path d="M2.6 6.6 H8 V8 H2 Z M11 6.6 H16.4 L17 8 H11 Z" fill="#5b82cf"/></svg>
<svg style="left:1174.5px;top:377.5px" width="19" height="19" viewBox="0 0 19 19"><rect x="0.8" y="0.8" width="17.4" height="17.4" rx="1" fill="#eaf2fd" stroke="#3f78d0" stroke-width="1.5"/><rect x="1.5" y="1.5" width="16" height="3" fill="#4f86dc"/><path d="M4 9 V6.5 H6.5 M12.5 6.5 H15 V9 M15 12.5 V15 H12.5 M6.5 15 H4 V12.5" stroke="#2a3f6a" stroke-width="1.6" fill="none"/></svg>
<svg style="left:1204px;top:377px" width="21" height="20" viewBox="0 0 21 20"><path d="M1 7 H17 V18.5 H4 L1 15.5 Z" fill="#e3c65a" stroke="#b8962e" stroke-width="1"/><path d="M1 15.5 H4 V18.5" fill="#c9a93c"/><path d="M5.5 13 L9 14.8 L17.5 3.8" stroke="#7a5a1e" stroke-width="2" fill="none"/><circle cx="18" cy="3" r="1.8" fill="#e0703a"/></svg>
<svg style="left:1240px;top:378.5px" width="17" height="17" viewBox="0 0 17 17"><rect x="1" y="1" width="15" height="15" fill="#fafafa" stroke="#4a4a4a" stroke-width="1.6"/><rect x="4.5" y="4.5" width="8" height="8" fill="#222"/></svg>
<svg style="left:1261px;top:381.5px" width="6" height="12" viewBox="0 0 6 12"><path d="M5 1 H1.5 V11 H5" stroke="#3c3040" stroke-width="1.8" fill="none"/></svg>
<svg style="left:1276.5px;top:381px" width="16" height="12" viewBox="0 0 16 12"><rect x="1" y="0.5" width="2.6" height="11" fill="#a9a9a9"/><path d="M14.5 0.5 L4.5 6 L14.5 11.5 Z" fill="#a9a9a9"/></svg>
<svg style="left:1310px;top:381px" width="12" height="12" viewBox="0 0 12 12"><path d="M11 0.5 L1 6 L11 11.5 Z" fill="#a9a9a9"/></svg>
<svg style="left:1344px;top:381px" width="12" height="12" viewBox="0 0 12 12"><path d="M1 0.5 L11 6 L1 11.5 Z" fill="#a9a9a9"/></svg>
<svg style="left:1374.5px;top:381px" width="16" height="12" viewBox="0 0 16 12"><rect x="12.4" y="0.5" width="2.6" height="11" fill="#a9a9a9"/><path d="M1.5 0.5 L11.5 6 L1.5 11.5 Z" fill="#a9a9a9"/></svg>
<svg style="left:1405px;top:379.5px" width="14" height="14" viewBox="0 0 14 14"><path d="M7 2.6 V11.4 M2.6 7 H11.4" stroke="#0b7d10" stroke-width="3.9" stroke-linecap="round" fill="none"/></svg>
<svg style="left:1439px;top:384px" width="16" height="6" viewBox="0 0 16 6"><path d="M3.7 3 H12.3" stroke="#a6a6a6" stroke-width="3.8" stroke-linecap="round" fill="none"/></svg>
<svg style="left:1472px;top:380.5px" width="14" height="12" viewBox="0 0 14 12"><path d="M1.5 6.5 L5 10 L12.5 1.8" stroke="#8d8d8d" stroke-width="2.6" fill="none" stroke-linejoin="miter"/></svg>
<svg style="left:1505px;top:381px" width="12" height="12" viewBox="0 0 12 12"><path d="M1.5 1.5 L10.5 10.5 M10.5 1.5 L1.5 10.5" stroke="#8d8d8d" stroke-width="2.6" fill="none"/></svg>
<svg style="left:1537px;top:379.0px" width="16" height="15" viewBox="0 0 16 15"><path d="M7 12.5 C3.5 10.5 3 5 6.5 3.6 C8.4 3 9.6 3.8 10.6 5.2 L9 8 L7.6 6.5 C6 7 6 10 7 12.5 Z" fill="#c3e2ff"/><path d="M7.2 13.6 C1.6 10.2 1 3.6 6.4 2 C8.6 1.5 10.4 2.4 11.6 4.2" stroke="#1f63b6" stroke-width="2.5" fill="none" stroke-linecap="round"/><path d="M8.6 6.9 L14.2 1.6 L14.9 8.6 Z" fill="#1b78d4"/></svg>
<div style="left:1136px;top:407.5px;width:426px;height:191px;background:#ababab;"></div>
<div style="left:1136px;top:598px;width:426px;height:24px;background:#000000;"></div>
<span style="left:1294.12px;top:493.50px;font-size:14px;line-height:20px;color:#dedede;letter-spacing:-0.200px;transform:scaleX(0.9386);transform-origin:center center;">No image loaded.</span>
<span style="left:1149.40px;top:601.00px;font-size:14px;line-height:20px;color:#d6d6d6;letter-spacing:-0.134px;">0/0</span>
<svg style="left:1241.3px;top:512.8px" width="12" height="17" viewBox="0 0 13 19"><path d="M1 1 V14.5 L4.2 11.6 L6.6 17 L8.8 16 L6.5 10.8 H10.8 Z" fill="#fff" stroke="#2a2a2a" stroke-width="1.1"/></svg>
<div style="left:2px;top:628px;width:1566px;height:1px;background:#d9d9d9;"></div>
<div style="left:2px;top:628.5px;width:1566px;height:251px;background:#fbfbfb;"></div>
<div style="left:6px;top:629px;width:1px;height:250px;background:#e2e2e2;"></div>
<div style="left:7px;top:629px;width:1px;height:250px;background:#e2e2e2;opacity:0.20;"></div>
<div style="left:2px;top:656.5px;width:1566px;height:4px;background:#f3f3f3;"></div>
<div style="left:141px;top:634px;width:102.5px;height:23px;background:#efefef;box-shadow:0 0 0 1px #e0e0e0;"></div>
<span style="left:16.40px;top:633.50px;font-size:14px;line-height:20px;color:#303030;letter-spacing:0.098px;">Inspection Groups</span>
<span style="left:148.40px;top:636.00px;font-size:14px;line-height:20px;color:#303030;letter-spacing:-0.200px;transform:scaleX(0.9639);transform-origin:left center;">Gages/Devices</span>
<div style="left:11px;top:660.5px;width:793px;height:30.5px;background:#f0f0f0;"></div>
<div style="left:11px;top:660px;width:793px;height:1px;background:#bdbdbd;"></div>
<div style="left:11px;top:661px;width:793px;height:1px;background:#bdbdbd;opacity:0.30;"></div>
<div style="left:11px;top:660.5px;width:1px;height:30.5px;background:#c6c6c6;"></div>
<svg style="left:18.0px;top:669px" width="19" height="16" viewBox="0 0 19 16"><path d="M4.6 0.3 H7.6 L8.8 5.5 V15.6 H0.4 V9 Z" fill="#3a5eb2"/><path d="M11.4 0.3 H14.4 L18.6 9 V15.6 H10.2 V5.5 Z" fill="#3a5eb2"/><rect x="8" y="5.2" width="3" height="4.6" fill="#2a4690"/><path d="M5.2 1.4 H7 L7.7 5 H3.7 Z M12 1.4 H13.8 L15.4 5 H11.3 Z" fill="#7da4e4"/><rect x="1.6" y="9.6" width="2.6" height="4.6" fill="#b9d3f7"/><rect x="5.2" y="9.6" width="2.4" height="4.6" fill="#8fb4ec"/><rect x="11.4" y="9.6" width="2.6" height="4.6" fill="#b9d3f7"/><rect x="15" y="9.6" width="2.4" height="4.6" fill="#8fb4ec"/><path d="M2.6 6.6 H8 V8 H2 Z M11 6.6 H16.4 L17 8 H11 Z" fill="#5b82cf"/></svg>
<div style="left:47px;top:666.5px;width:1px;height:22px;background:#c4c4c4;"></div>
<svg style="left:61.5px;top:671.0px" width="13" height="13" viewBox="0 0 13 13"><path d="M6.5 0.7 L12.5 7.2 H9.2 V12.2 H3.8 V7.2 H0.5 Z" fill="#66b058" stroke="#468f3d" stroke-width="0.7"/><path d="M6.5 2.4 L9.8 5.8 H8 V11.3 H6.5 Z" fill="#9ad88a"/></svg>
<svg style="left:92.5px;top:671.0px" width="13" height="13" viewBox="0 0 13 13"><path d="M6.5 12.3 L12.5 5.8 H9.2 V0.8 H3.8 V5.8 H0.5 Z" fill="#66b058" stroke="#468f3d" stroke-width="0.7"/><path d="M6.5 10.6 L9.8 7.2 H8 V1.7 H6.5 Z" fill="#9ad88a"/></svg>
<div style="left:118px;top:666.5px;width:1px;height:22px;background:#c4c4c4;"></div>
<svg style="left:134px;top:670px" width="20" height="16" viewBox="0 0 20 16"><rect x="0.8" y="0.8" width="8" height="5" fill="#b5b5b5" stroke="#4f4f4f" stroke-width="1.4"/><path d="M9 3.3 H12 V11.4 H13.5 M12 6.5 H13" stroke="#c9a227" stroke-width="1.6" fill="none"/><rect x="8.6" y="5.3" width="6" height="4.4" fill="#f3d24a" stroke="#c9a227" stroke-width="1"/><rect x="12.4" y="10" width="6.8" height="5" fill="#b5b5b5" stroke="#4f4f4f" stroke-width="1.4"/></svg>
<svg style="left:538.5px;top:671px" width="16" height="12" viewBox="0 0 16 12"><rect x="1" y="0.5" width="2.6" height="11" fill="#a9a9a9"/><path d="M14.5 0.5 L4.5 6 L14.5 11.5 Z" fill="#a9a9a9"/></svg>
<svg style="left:571px;top:671px" width="12" height="12" viewBox="0 0 12 12"><path d="M11 0.5 L1 6 L11 11.5 Z" fill="#a9a9a9"/></svg>
<svg style="left:600px;top:671px" width="12" height="12" viewBox="0 0 12 12"><path d="M1 0.5 L11 6 L1 11.5 Z" fill="#1b72d8"/></svg>
<svg style="left:629.5px;top:671px" width="16" height="12" viewBox="0 0 16 12"><rect x="12.4" y="0.5" width="2.6" height="11" fill="#1b72d8"/><path d="M1.5 0.5 L11.5 6 L1.5 11.5 Z" fill="#1b72d8"/></svg>
<svg style="left:660px;top:670px" width="14" height="14" viewBox="0 0 14 14"><path d="M7 2.6 V11.4 M2.6 7 H11.4" stroke="#0b7d10" stroke-width="3.9" stroke-linecap="round" fill="none"/></svg>
<svg style="left:691px;top:674px" width="16" height="6" viewBox="0 0 16 6"><path d="M3.7 3 H12.3" stroke="#e9723c" stroke-width="3.8" stroke-linecap="round" fill="none"/></svg>
<svg style="left:722.5px;top:671px" width="14" height="12" viewBox="0 0 14 12"><path d="M1.5 6.5 L5 10 L12.5 1.8" stroke="#8d8d8d" stroke-width="2.6" fill="none" stroke-linejoin="miter"/></svg>
<svg style="left:754px;top:671px" width="12" height="12" viewBox="0 0 12 12"><path d="M1.5 1.5 L10.5 10.5 M10.5 1.5 L1.5 10.5" stroke="#8d8d8d" stroke-width="2.6" fill="none"/></svg>
<svg style="left:783px;top:669.5px" width="16" height="15" viewBox="0 0 16 15"><path d="M7 12.5 C3.5 10.5 3 5 6.5 3.6 C8.4 3 9.6 3.8 10.6 5.2 L9 8 L7.6 6.5 C6 7 6 10 7 12.5 Z" fill="#c3e2ff"/><path d="M7.2 13.6 C1.6 10.2 1 3.6 6.4 2 C8.6 1.5 10.4 2.4 11.6 4.2" stroke="#1f63b6" stroke-width="2.5" fill="none" stroke-linecap="round"/><path d="M8.6 6.9 L14.2 1.6 L14.9 8.6 Z" fill="#1b78d4"/></svg>
<div style="left:11px;top:697.5px;width:794px;height:182px;background:#ffffff;box-sizing:border-box;border:1.2px solid #b9b9b9;border-bottom:none;"></div>
<div style="left:26px;top:699.5px;width:1px;height:36px;background:#e4e4e4;"></div>
<div style="left:84px;top:699.5px;width:1px;height:36px;background:#e4e4e4;"></div>
<div style="left:252px;top:699.5px;width:1px;height:36px;background:#e4e4e4;"></div>
<div style="left:442px;top:699.5px;width:1px;height:36px;background:#e4e4e4;"></div>
<div style="left:527px;top:699.5px;width:1px;height:36px;background:#e4e4e4;"></div>
<div style="left:622px;top:699.5px;width:1px;height:36px;background:#e4e4e4;"></div>
<div style="left:760px;top:699.5px;width:1px;height:36px;background:#e4e4e4;"></div>
<span style="left:30.00px;top:705.80px;font-size:10px;line-height:20px;color:#1c1c1c;font-weight:bold;font-style:italic;">#</span>
<span style="left:87.40px;top:706.80px;font-size:14px;line-height:20px;color:#2c2c2c;letter-spacing:-0.200px;transform:scaleX(0.9304);transform-origin:left center;">Name</span>
<span style="left:255.40px;top:706.80px;font-size:14px;line-height:20px;color:#2c2c2c;letter-spacing:0.117px;">Description</span>
<span style="left:445.40px;top:706.80px;font-size:14px;line-height:20px;color:#2c2c2c;letter-spacing:-0.200px;transform:scaleX(0.9589);transform-origin:left center;">Sample Type</span>
<span style="left:530.40px;top:706.80px;font-size:14px;line-height:20px;color:#2c2c2c;letter-spacing:-0.138px;">Sample Count</span>
<span style="left:625.40px;top:706.80px;font-size:14px;line-height:20px;color:#2c2c2c;letter-spacing:-0.269px;">Created</span>
<span style="left:764.40px;top:706.80px;font-size:14px;line-height:20px;color:#2c2c2c;letter-spacing:-0.200px;transform:scaleX(0.9554);transform-origin:left center;width:21px;overflow:hidden;">Created By</span>
<div style="left:12px;top:736px;width:774px;height:1px;background:#e0e0e0;"></div>
<div style="left:26px;top:736.5px;width:1px;height:83.6px;background:#b0b0b0;"></div>
<div style="left:27px;top:736.5px;width:1px;height:83.6px;background:#b0b0b0;opacity:0.20;"></div>
<div style="left:86px;top:737.8px;width:166px;height:18.55px;background:#0970e2;"></div>
<span style="left:72.70px;top:738.18px;font-size:14px;line-height:20px;color:#333;">1</span>
<span style="left:87.40px;top:737.98px;font-size:14px;line-height:20px;color:#b9defd;letter-spacing:0.119px;">StartUp Inspection</span>
<span style="left:445.40px;top:737.98px;font-size:14px;line-height:20px;color:#2a2a2a;letter-spacing:0.354px;">Subgroup</span>
<span style="left:610.70px;top:737.98px;font-size:14px;line-height:20px;color:#2a2a2a;">3</span>
<span style="left:625.40px;top:737.98px;font-size:14px;line-height:20px;color:#2a2a2a;letter-spacing:-0.078px;width:135px;overflow:hidden;">10/3/2022 11:20:28 AM</span>
<span style="left:764.40px;top:737.98px;font-size:14px;line-height:20px;color:#2a2a2a;letter-spacing:-0.200px;transform:scaleX(0.9153);transform-origin:left center;width:21.5px;overflow:hidden;">IQMS</span>
<div style="left:26px;top:756px;width:58px;height:1px;background:#a6a6a6;"></div>
<div style="left:26px;top:757px;width:58px;height:1px;background:#a6a6a6;opacity:0.40;"></div>
<div style="left:13px;top:757px;width:13px;height:1px;background:#e6e6e6;"></div>
<div style="left:84px;top:756px;width:701.5px;height:1px;background:#cfcfcf;"></div>
<div style="left:84px;top:757px;width:701.5px;height:1px;background:#cfcfcf;opacity:0.30;"></div>
<span style="left:72.70px;top:758.93px;font-size:14px;line-height:20px;color:#333;">2</span>
<span style="left:87.40px;top:758.73px;font-size:14px;line-height:20px;color:#2a2a2a;letter-spacing:-0.133px;">In Process Inspection</span>
<span style="left:445.40px;top:758.73px;font-size:14px;line-height:20px;color:#2a2a2a;letter-spacing:0.204px;">Individuals</span>
<span style="left:610.70px;top:758.73px;font-size:14px;line-height:20px;color:#2a2a2a;">5</span>
<span style="left:625.40px;top:758.73px;font-size:14px;line-height:20px;color:#2a2a2a;letter-spacing:-0.053px;width:135px;overflow:hidden;">9/27/2022 11:19:51 AM</span>
<span style="left:764.40px;top:758.73px;font-size:14px;line-height:20px;color:#2a2a2a;letter-spacing:-0.200px;transform:scaleX(0.9153);transform-origin:left center;width:21.5px;overflow:hidden;">IQMS</span>
<div style="left:26px;top:777px;width:58px;height:1px;background:#a6a6a6;"></div>
<div style="left:26px;top:778px;width:58px;height:1px;background:#a6a6a6;opacity:0.40;"></div>
<div style="left:13px;top:777px;width:13px;height:1px;background:#e6e6e6;"></div>
<div style="left:84px;top:777px;width:701.5px;height:1px;background:#cfcfcf;"></div>
<div style="left:84px;top:778px;width:701.5px;height:1px;background:#cfcfcf;opacity:0.30;"></div>
<span style="left:72.70px;top:779.68px;font-size:14px;line-height:20px;color:#333;">3</span>
<span style="left:87.40px;top:779.48px;font-size:14px;line-height:20px;color:#2a2a2a;letter-spacing:0.098px;">First Article Inspection</span>
<span style="left:255.40px;top:779.48px;font-size:14px;line-height:20px;color:#2a2a2a;letter-spacing:-0.200px;transform:scaleX(0.8343);transform-origin:left center;">FAI</span>
<span style="left:445.40px;top:779.48px;font-size:14px;line-height:20px;color:#2a2a2a;letter-spacing:0.204px;">Individuals</span>
<span style="left:610.70px;top:779.48px;font-size:14px;line-height:20px;color:#2a2a2a;">5</span>
<span style="left:625.40px;top:779.48px;font-size:14px;line-height:20px;color:#2a2a2a;letter-spacing:-0.105px;width:135px;overflow:hidden;">9/27/2022 10:58:09 AM</span>
<span style="left:764.40px;top:779.48px;font-size:14px;line-height:20px;color:#2a2a2a;letter-spacing:-0.200px;transform:scaleX(0.9153);transform-origin:left center;width:21.5px;overflow:hidden;">IQMS</span>
<div style="left:26px;top:798px;width:58px;height:1px;background:#a6a6a6;"></div>
<div style="left:26px;top:799px;width:58px;height:1px;background:#a6a6a6;opacity:0.40;"></div>
<div style="left:13px;top:798px;width:13px;height:1px;background:#e6e6e6;"></div>
<div style="left:84px;top:798px;width:701.5px;height:1px;background:#cfcfcf;"></div>
<div style="left:84px;top:799px;width:701.5px;height:1px;background:#cfcfcf;opacity:0.30;"></div>
<span style="left:72.70px;top:800.43px;font-size:14px;line-height:20px;color:#333;">4</span>
<span style="left:87.40px;top:800.23px;font-size:14px;line-height:20px;color:#2a2a2a;letter-spacing:0.076px;">Final Inspection</span>
<span style="left:445.40px;top:800.23px;font-size:14px;line-height:20px;color:#2a2a2a;letter-spacing:0.354px;">Subgroup</span>
<span style="left:610.70px;top:800.23px;font-size:14px;line-height:20px;color:#2a2a2a;">3</span>
<span style="left:625.40px;top:800.23px;font-size:14px;line-height:20px;color:#2a2a2a;letter-spacing:-0.053px;width:135px;overflow:hidden;">9/27/2022 11:22:05 AM</span>
<span style="left:764.40px;top:800.23px;font-size:14px;line-height:20px;color:#2a2a2a;letter-spacing:-0.200px;transform:scaleX(0.9153);transform-origin:left center;width:21.5px;overflow:hidden;">IQMS</span>
<div style="left:26px;top:819px;width:58px;height:1px;background:#a6a6a6;"></div>
<div style="left:26px;top:820px;width:58px;height:1px;background:#a6a6a6;opacity:0.40;"></div>
<div style="left:13px;top:819px;width:13px;height:1px;background:#e6e6e6;"></div>
<div style="left:84px;top:819px;width:701.5px;height:1px;background:#cfcfcf;"></div>
<div style="left:84px;top:820px;width:701.5px;height:1px;background:#cfcfcf;opacity:0.30;"></div>
<div style="left:84px;top:737px;width:1px;height:83.0px;background:#d2d2d2;"></div>
<div style="left:85px;top:737px;width:1px;height:83.0px;background:#d2d2d2;opacity:0.20;"></div>
<div style="left:252px;top:737px;width:1px;height:83.0px;background:#d2d2d2;"></div>
<div style="left:253px;top:737px;width:1px;height:83.0px;background:#d2d2d2;opacity:0.20;"></div>
<div style="left:442px;top:737px;width:1px;height:83.0px;background:#d2d2d2;"></div>
<div style="left:443px;top:737px;width:1px;height:83.0px;background:#d2d2d2;opacity:0.20;"></div>
<div style="left:527px;top:737px;width:1px;height:83.0px;background:#d2d2d2;"></div>
<div style="left:528px;top:737px;width:1px;height:83.0px;background:#d2d2d2;opacity:0.20;"></div>
<div style="left:621px;top:737px;width:1px;height:83.0px;background:#d2d2d2;"></div>
<div style="left:622px;top:737px;width:1px;height:83.0px;background:#d2d2d2;opacity:0.20;"></div>
<div style="left:760px;top:737px;width:1px;height:83.0px;background:#d2d2d2;"></div>
<div style="left:761px;top:737px;width:1px;height:83.0px;background:#d2d2d2;opacity:0.20;"></div>
<svg style="left:15px;top:740.375px" width="8" height="14" viewBox="0 0 8 14"><path d="M0.3 0.5 L7.5 7 L0.3 13.5 Z" fill="#0c0c0c"/></svg>
<div style="left:786px;top:699px;width:19px;height:153px;background:#f2f2f2;"></div>
<svg style="left:790.5px;top:705.25px" width="11" height="8.5" viewBox="0 0 11 8.5"><path d="M1 6.5 L5.5 2 L10 6.5" stroke="#4d4d4d" stroke-width="2" fill="none"/></svg>
<svg style="left:790.5px;top:836.25px" width="11" height="8.5" viewBox="0 0 11 8.5"><path d="M1 2 L5.5 6.5 L10 2" stroke="#4d4d4d" stroke-width="2" fill="none"/></svg>
<div style="left:786.5px;top:720.5px;width:18.5px;height:60.5px;background:#cdcdcd;"></div>
<div style="left:12.5px;top:852px;width:773px;height:27px;background:#f0f0f0;"></div>
<svg style="left:17.75px;top:856.0px" width="8.5" height="11" viewBox="0 0 8.5 11"><path d="M6.5 1 L2 5.5 L6.5 10" stroke="#4d4d4d" stroke-width="2" fill="none"/></svg>
<svg style="left:770.75px;top:856.0px" width="8.5" height="11" viewBox="0 0 8.5 11"><path d="M2 1 L6.5 5.5 L2 10" stroke="#4d4d4d" stroke-width="2" fill="none"/></svg>
<div style="left:33.2px;top:853.8px;width:20px;height:16.6px;background:#cdcdcd;"></div>
<div style="left:807px;top:660px;width:1px;height:219px;background:#ececec;"></div>
<div style="left:808px;top:660px;width:1px;height:219px;background:#ececec;opacity:0.40;"></div>
<div style="left:811.5px;top:660.5px;width:750.5px;height:30.5px;background:#f0f0f0;"></div>
<div style="left:811.5px;top:660px;width:750.5px;height:1px;background:#bdbdbd;"></div>
<div style="left:811.5px;top:661px;width:750.5px;height:1px;background:#bdbdbd;opacity:0.30;"></div>
<div style="left:812px;top:660.5px;width:1px;height:30.5px;background:#c6c6c6;"></div>
<svg style="left:821.5px;top:671.0px" width="13" height="13" viewBox="0 0 13 13"><path d="M6.5 0.7 L12.5 7.2 H9.2 V12.2 H3.8 V7.2 H0.5 Z" fill="#66b058" stroke="#468f3d" stroke-width="0.7"/><path d="M6.5 2.4 L9.8 5.8 H8 V11.3 H6.5 Z" fill="#9ad88a"/></svg>
<svg style="left:852.0px;top:671.0px" width="13" height="13" viewBox="0 0 13 13"><path d="M6.5 12.3 L12.5 5.8 H9.2 V0.8 H3.8 V5.8 H0.5 Z" fill="#66b058" stroke="#468f3d" stroke-width="0.7"/><path d="M6.5 10.6 L9.8 7.2 H8 V1.7 H6.5 Z" fill="#9ad88a"/></svg>
<div style="left:883px;top:666.5px;width:1px;height:22px;background:#c4c4c4;"></div>
<svg style="left:896px;top:667px" width="18" height="21" viewBox="0 0 18 21"><text x="0.5" y="15.5" font-family="Liberation Serif" font-style="italic" font-weight="bold" font-size="19" fill="#1c1c1c">f</text><text x="7.6" y="16.2" font-family="Liberation Serif" font-style="italic" font-weight="bold" font-size="12.5" fill="#1c1c1c" stroke="#1c1c1c" stroke-width="0.4">x</text></svg>
<svg style="left:924px;top:665.5px" width="22" height="23" viewBox="0 0 22 23"><circle cx="10.4" cy="10.2" r="8.6" fill="#dce8fb" stroke="#4b76c6" stroke-width="1.9"/><circle cx="10.4" cy="10.2" r="6.6" fill="none" stroke="#b5cdf3" stroke-width="1.2"/><path d="M16.6 16.6 L18.6 18.8" stroke="#8a6a4a" stroke-width="2.2" stroke-linecap="round"/><circle cx="18.8" cy="19.3" r="1.9" fill="#d9883a"/><text x="6" y="14" font-family="Liberation Serif" font-style="italic" font-weight="bold" font-size="12" fill="#3d4f96">f</text><text x="10.3" y="14" font-family="Liberation Serif" font-style="italic" font-weight="bold" font-size="8" fill="#3d4f96">x</text></svg>
<div style="left:957px;top:666.5px;width:1px;height:22px;background:#c4c4c4;"></div>
<svg style="left:968px;top:668px" width="18" height="19" viewBox="0 0 18 19"><path d="M1.5 2 H8.5 M1.5 11.6 H8.5" stroke="#a8303a" stroke-width="1.7"/><rect x="7" y="3.3" width="9.6" height="4.2" fill="#1f1a1c"/><rect x="7" y="13" width="9.6" height="4.4" fill="#1f1a1c"/></svg>
<div style="left:1248.5px;top:670.5px;width:13px;height:12.5px;background:#a9cbf2;box-sizing:border-box;border:1.5px solid #3d4658;"></div>
<div style="left:1264.5px;top:670.5px;width:13px;height:12.5px;background:#c4dcc4;box-sizing:border-box;border:1.5px solid #3d4658;"></div>
<svg style="left:1293px;top:670.5px" width="16" height="12" viewBox="0 0 16 12"><rect x="1" y="0.5" width="2.6" height="11" fill="#a9a9a9"/><path d="M14.5 0.5 L4.5 6 L14.5 11.5 Z" fill="#a9a9a9"/></svg>
<svg style="left:1326px;top:670.5px" width="12" height="12" viewBox="0 0 12 12"><path d="M11 0.5 L1 6 L11 11.5 Z" fill="#a9a9a9"/></svg>
<svg style="left:1354.5px;top:670.5px" width="12" height="12" viewBox="0 0 12 12"><path d="M1 0.5 L11 6 L1 11.5 Z" fill="#1b72d8"/></svg>
<svg style="left:1384.5px;top:670.5px" width="16" height="12" viewBox="0 0 16 12"><rect x="12.4" y="0.5" width="2.6" height="11" fill="#1b72d8"/><path d="M1.5 0.5 L11.5 6 L1.5 11.5 Z" fill="#1b72d8"/></svg>
<svg style="left:1415px;top:669.5px" width="14" height="14" viewBox="0 0 14 14"><path d="M7 2.6 V11.4 M2.6 7 H11.4" stroke="#0b7d10" stroke-width="3.9" stroke-linecap="round" fill="none"/></svg>
<svg style="left:1446px;top:673.5px" width="16" height="6" viewBox="0 0 16 6"><path d="M3.7 3 H12.3" stroke="#e9723c" stroke-width="3.8" stroke-linecap="round" fill="none"/></svg>
<svg style="left:1477px;top:670.5px" width="14" height="12" viewBox="0 0 14 12"><path d="M1.5 6.5 L5 10 L12.5 1.8" stroke="#8d8d8d" stroke-width="2.6" fill="none" stroke-linejoin="miter"/></svg>
<svg style="left:1509px;top:670.5px" width="12" height="12" viewBox="0 0 12 12"><path d="M1.5 1.5 L10.5 10.5 M10.5 1.5 L1.5 10.5" stroke="#8d8d8d" stroke-width="2.6" fill="none"/></svg>
<svg style="left:1538px;top:669.0px" width="16" height="15" viewBox="0 0 16 15"><path d="M7 12.5 C3.5 10.5 3 5 6.5 3.6 C8.4 3 9.6 3.8 10.6 5.2 L9 8 L7.6 6.5 C6 7 6 10 7 12.5 Z" fill="#c3e2ff"/><path d="M7.2 13.6 C1.6 10.2 1 3.6 6.4 2 C8.6 1.5 10.4 2.4 11.6 4.2" stroke="#1f63b6" stroke-width="2.5" fill="none" stroke-linecap="round"/><path d="M8.6 6.9 L14.2 1.6 L14.9 8.6 Z" fill="#1b78d4"/></svg>
<div style="left:811.5px;top:697.5px;width:750.5px;height:182px;background:#ffffff;box-sizing:border-box;border:1.2px solid #b9b9b9;border-bottom:none;"></div>
<div style="left:827px;top:699.5px;width:1px;height:20.5px;background:#e4e4e4;"></div>
<div style="left:885px;top:699.5px;width:1px;height:20.5px;background:#e4e4e4;"></div>
<div style="left:1038px;top:699.5px;width:1px;height:20.5px;background:#e4e4e4;"></div>
<div style="left:1117px;top:699.5px;width:1px;height:20.5px;background:#e4e4e4;"></div>
<div style="left:1197px;top:699.5px;width:1px;height:20.5px;background:#e4e4e4;"></div>
<div style="left:1277px;top:699.5px;width:1px;height:20.5px;background:#e4e4e4;"></div>
<div style="left:1357px;top:699.5px;width:1px;height:20.5px;background:#e4e4e4;"></div>
<div style="left:1437px;top:699.5px;width:1px;height:20.5px;background:#e4e4e4;"></div>
<div style="left:1516px;top:699.5px;width:1px;height:20.5px;background:#e4e4e4;"></div>
<span style="left:830.00px;top:698.30px;font-size:10px;line-height:20px;color:#1c1c1c;font-weight:bold;font-style:italic;">#</span>
<span style="left:887.40px;top:699.50px;font-size:14px;line-height:20px;color:#2c2c2c;letter-spacing:-0.200px;transform:scaleX(0.9755);transform-origin:left center;">Parameter</span>
<span style="left:1041.40px;top:699.50px;font-size:14px;line-height:20px;color:#2c2c2c;letter-spacing:-0.200px;transform:scaleX(0.9716);transform-origin:left center;">Data Type</span>
<span style="left:1121.40px;top:699.50px;font-size:14px;line-height:20px;color:#2c2c2c;letter-spacing:-0.200px;transform:scaleX(0.8826);transform-origin:left center;">Class</span>
<span style="left:1200.40px;top:699.50px;font-size:14px;line-height:20px;color:#2c2c2c;letter-spacing:-0.200px;transform:scaleX(0.7830);transform-origin:left center;">LSL</span>
<span style="left:1280.40px;top:699.50px;font-size:14px;line-height:20px;color:#2c2c2c;letter-spacing:0.056px;">Target</span>
<span style="left:1360.40px;top:699.50px;font-size:14px;line-height:20px;color:#2c2c2c;letter-spacing:-0.200px;transform:scaleX(0.8273);transform-origin:left center;">USL</span>
<span style="left:1440.40px;top:699.50px;font-size:14px;line-height:20px;color:#2c2c2c;letter-spacing:0.264px;">UOM</span>
<span style="left:1520.40px;top:699.50px;font-size:14px;line-height:20px;color:#2c2c2c;letter-spacing:-0.269px;width:20.5px;overflow:hidden;">Created</span>
<div style="left:828px;top:720.2px;width:712.5px;height:20.9px;background:#c2dcc3;"></div>
<div style="left:886px;top:720.5px;width:151.5px;height:19.5px;background:#0970e2;"></div>
<span style="left:872.70px;top:721.95px;font-size:14px;line-height:20px;color:#333;">1</span>
<span style="left:888.40px;top:721.75px;font-size:14px;line-height:20px;color:#b9defd;letter-spacing:-0.200px;transform:scaleX(0.9552);transform-origin:left center;">Average L</span>
<span style="left:1041.40px;top:721.75px;font-size:14px;line-height:20px;color:#2a2a2a;letter-spacing:-0.200px;transform:scaleX(0.9851);transform-origin:left center;">Variable</span>
<span style="left:1121.40px;top:721.75px;font-size:14px;line-height:20px;color:#2a2a2a;letter-spacing:0.046px;">Major</span>
<span style="left:1217.09px;top:721.75px;font-size:14px;line-height:20px;color:#2a2a2a;letter-spacing:-0.200px;transform:scaleX(0.9508);transform-origin:right center;">1.150000</span>
<span style="left:1297.09px;top:721.75px;font-size:14px;line-height:20px;color:#2a2a2a;letter-spacing:-0.200px;transform:scaleX(0.9508);transform-origin:right center;">2.050000</span>
<span style="left:1377.09px;top:721.75px;font-size:14px;line-height:20px;color:#2a2a2a;letter-spacing:-0.200px;transform:scaleX(0.9508);transform-origin:right center;">3.150000</span>
<span style="left:1440.40px;top:721.75px;font-size:14px;line-height:20px;color:#2a2a2a;letter-spacing:-0.128px;">MM</span>
<div style="left:827px;top:740px;width:713.5px;height:1px;background:#b4d0b6;"></div>
<div style="left:827px;top:741px;width:713.5px;height:1px;background:#b4d0b6;opacity:0.20;"></div>
<div style="left:813px;top:740px;width:13px;height:1px;background:#e6e6e6;"></div>
<div style="left:828px;top:741.1px;width:712.5px;height:20.9px;background:#eeeeee;"></div>
<span style="left:872.70px;top:742.85px;font-size:14px;line-height:20px;color:#333;">2</span>
<span style="left:888.40px;top:742.65px;font-size:14px;line-height:20px;color:#2a2a2a;letter-spacing:-0.126px;">Length</span>
<span style="left:1041.40px;top:742.65px;font-size:14px;line-height:20px;color:#2a2a2a;letter-spacing:-0.200px;transform:scaleX(0.9851);transform-origin:left center;">Variable</span>
<span style="left:1121.40px;top:742.65px;font-size:14px;line-height:20px;color:#2a2a2a;letter-spacing:-0.200px;transform:scaleX(0.9797);transform-origin:left center;">None</span>
<span style="left:1217.09px;top:742.65px;font-size:14px;line-height:20px;color:#2a2a2a;letter-spacing:-0.200px;transform:scaleX(0.9508);transform-origin:right center;">1.000000</span>
<span style="left:1297.09px;top:742.65px;font-size:14px;line-height:20px;color:#2a2a2a;letter-spacing:-0.200px;transform:scaleX(0.9508);transform-origin:right center;">2.000000</span>
<span style="left:1377.09px;top:742.65px;font-size:14px;line-height:20px;color:#2a2a2a;letter-spacing:-0.200px;transform:scaleX(0.9508);transform-origin:right center;">3.000000</span>
<span style="left:1440.40px;top:742.65px;font-size:14px;line-height:20px;color:#2a2a2a;letter-spacing:-0.128px;">MM</span>
<div style="left:827px;top:760px;width:58px;height:1px;background:#a6a6a6;"></div>
<div style="left:827px;top:761px;width:58px;height:1px;background:#a6a6a6;opacity:0.40;"></div>
<div style="left:885px;top:760px;width:655.5px;height:1px;background:#c4c4c4;"></div>
<div style="left:885px;top:761px;width:655.5px;height:1px;background:#c4c4c4;opacity:0.70;"></div>
<div style="left:813px;top:761px;width:13px;height:1px;background:#e6e6e6;"></div>
<div style="left:828px;top:762.0px;width:712.5px;height:20.9px;background:#eeeeee;"></div>
<span style="left:872.70px;top:763.75px;font-size:14px;line-height:20px;color:#333;">3</span>
<span style="left:888.40px;top:763.55px;font-size:14px;line-height:20px;color:#2a2a2a;letter-spacing:-0.186px;">Length 2</span>
<span style="left:1041.40px;top:763.55px;font-size:14px;line-height:20px;color:#2a2a2a;letter-spacing:-0.200px;transform:scaleX(0.9851);transform-origin:left center;">Variable</span>
<span style="left:1121.40px;top:763.55px;font-size:14px;line-height:20px;color:#2a2a2a;letter-spacing:-0.200px;transform:scaleX(0.9797);transform-origin:left center;">None</span>
<span style="left:1217.09px;top:763.55px;font-size:14px;line-height:20px;color:#2a2a2a;letter-spacing:-0.200px;transform:scaleX(0.9508);transform-origin:right center;">1.000000</span>
<span style="left:1297.09px;top:763.55px;font-size:14px;line-height:20px;color:#2a2a2a;letter-spacing:-0.200px;transform:scaleX(0.9508);transform-origin:right center;">2.000000</span>
<span style="left:1377.09px;top:763.55px;font-size:14px;line-height:20px;color:#2a2a2a;letter-spacing:-0.200px;transform:scaleX(0.9508);transform-origin:right center;">3.000000</span>
<span style="left:1440.40px;top:763.55px;font-size:14px;line-height:20px;color:#2a2a2a;letter-spacing:-0.128px;">MM</span>
<div style="left:827px;top:781px;width:58px;height:1px;background:#a6a6a6;"></div>
<div style="left:827px;top:782px;width:58px;height:1px;background:#a6a6a6;opacity:0.40;"></div>
<div style="left:885px;top:781px;width:655.5px;height:1px;background:#c4c4c4;"></div>
<div style="left:885px;top:782px;width:655.5px;height:1px;background:#c4c4c4;opacity:0.70;"></div>
<div style="left:813px;top:782px;width:13px;height:1px;background:#e6e6e6;"></div>
<div style="left:826px;top:720.2px;width:1px;height:62.699999999999996px;background:#b0b0b0;"></div>
<div style="left:827px;top:720.2px;width:1px;height:62.699999999999996px;background:#b0b0b0;opacity:0.20;"></div>
<div style="left:885px;top:720.2px;width:1px;height:20.9px;background:#b2ccb3;"></div>
<div style="left:886px;top:720.2px;width:1px;height:20.9px;background:#b2ccb3;opacity:0.20;"></div>
<div style="left:885px;top:741.1px;width:1px;height:41.8px;background:#d3d3d3;"></div>
<div style="left:886px;top:741.1px;width:1px;height:41.8px;background:#d3d3d3;opacity:0.20;"></div>
<div style="left:1037px;top:720.2px;width:1px;height:20.9px;background:#b2ccb3;"></div>
<div style="left:1038px;top:720.2px;width:1px;height:20.9px;background:#b2ccb3;opacity:0.20;"></div>
<div style="left:1037px;top:741.1px;width:1px;height:41.8px;background:#d3d3d3;"></div>
<div style="left:1038px;top:741.1px;width:1px;height:41.8px;background:#d3d3d3;opacity:0.20;"></div>
<div style="left:1117px;top:720.2px;width:1px;height:20.9px;background:#b2ccb3;"></div>
<div style="left:1118px;top:720.2px;width:1px;height:20.9px;background:#b2ccb3;opacity:0.20;"></div>
<div style="left:1117px;top:741.1px;width:1px;height:41.8px;background:#d3d3d3;"></div>
<div style="left:1118px;top:741.1px;width:1px;height:41.8px;background:#d3d3d3;opacity:0.20;"></div>
<div style="left:1197px;top:720.2px;width:1px;height:20.9px;background:#b2ccb3;"></div>
<div style="left:1198px;top:720.2px;width:1px;height:20.9px;background:#b2ccb3;opacity:0.20;"></div>
<div style="left:1197px;top:741.1px;width:1px;height:41.8px;background:#d3d3d3;"></div>
<div style="left:1198px;top:741.1px;width:1px;height:41.8px;background:#d3d3d3;opacity:0.20;"></div>
<div style="left:1277px;top:720.2px;width:1px;height:20.9px;background:#b2ccb3;"></div>
<div style="left:1278px;top:720.2px;width:1px;height:20.9px;background:#b2ccb3;opacity:0.20;"></div>
<div style="left:1277px;top:741.1px;width:1px;height:41.8px;background:#d3d3d3;"></div>
<div style="left:1278px;top:741.1px;width:1px;height:41.8px;background:#d3d3d3;opacity:0.20;"></div>
<div style="left:1357px;top:720.2px;width:1px;height:20.9px;background:#b2ccb3;"></div>
<div style="left:1358px;top:720.2px;width:1px;height:20.9px;background:#b2ccb3;opacity:0.20;"></div>
<div style="left:1357px;top:741.1px;width:1px;height:41.8px;background:#d3d3d3;"></div>
<div style="left:1358px;top:741.1px;width:1px;height:41.8px;background:#d3d3d3;opacity:0.20;"></div>
<div style="left:1437px;top:720.2px;width:1px;height:20.9px;background:#b2ccb3;"></div>
<div style="left:1438px;top:720.2px;width:1px;height:20.9px;background:#b2ccb3;opacity:0.20;"></div>
<div style="left:1437px;top:741.1px;width:1px;height:41.8px;background:#d3d3d3;"></div>
<div style="left:1438px;top:741.1px;width:1px;height:41.8px;background:#d3d3d3;opacity:0.20;"></div>
<div style="left:1516px;top:720.2px;width:1px;height:20.9px;background:#b2ccb3;"></div>
<div style="left:1517px;top:720.2px;width:1px;height:20.9px;background:#b2ccb3;opacity:0.20;"></div>
<div style="left:1516px;top:741.1px;width:1px;height:41.8px;background:#d3d3d3;"></div>
<div style="left:1517px;top:741.1px;width:1px;height:41.8px;background:#d3d3d3;opacity:0.20;"></div>
<svg style="left:815.8px;top:722.8500000000001px" width="8" height="14" viewBox="0 0 8 14"><path d="M0.3 0.5 L7.5 7 L0.3 13.5 Z" fill="#0c0c0c"/></svg>
<div style="left:1539.5px;top:699px;width:22px;height:180px;background:#f0f0f0;"></div>
<svg style="left:1545.5px;top:705.25px" width="11" height="8.5" viewBox="0 0 11 8.5"><path d="M1 6.5 L5.5 2 L10 6.5" stroke="#4d4d4d" stroke-width="2" fill="none"/></svg>
<svg style="left:1545.5px;top:836.25px" width="11" height="8.5" viewBox="0 0 11 8.5"><path d="M1 2 L5.5 6.5 L10 2" stroke="#4d4d4d" stroke-width="2" fill="none"/></svg>
<div style="left:1542.5px;top:720.5px;width:17.5px;height:64.5px;background:#cdcdcd;"></div>
<div style="left:813px;top:852px;width:728px;height:27px;background:#f0f0f0;"></div>
<svg style="left:817.75px;top:856.0px" width="8.5" height="11" viewBox="0 0 8.5 11"><path d="M6.5 1 L2 5.5 L6.5 10" stroke="#4d4d4d" stroke-width="2" fill="none"/></svg>
<svg style="left:1525.75px;top:856.0px" width="8.5" height="11" viewBox="0 0 8.5 11"><path d="M2 1 L6.5 5.5 L2 10" stroke="#4d4d4d" stroke-width="2" fill="none"/></svg>
<div style="left:833.2px;top:853.8px;width:21px;height:16.6px;background:#cdcdcd;"></div>
<div style="left:1564.5px;top:298px;width:2.8px;height:581px;background:#fbfbfb;"></div>
<div style="left:1562px;top:628px;width:5.3px;height:251px;background:#fbfbfb;"></div>
<div style="left:1567.3px;top:298px;width:9px;height:581px;background:#ececec;"></div>
<div style="left:-6px;top:-6px;width:7px;height:885px;background:#0b141c;"></div>
<div style="left:1px;top:-6px;width:1px;height:885px;background:rgba(11,20,28,0.3);"></div>
<svg style="left:0px;top:0px" width="12" height="14" viewBox="0 0 12 14"><path d="M0 0 H10 Q1.2 2.5 1 14 H0 Z" fill="#0d1720"/></svg>
<svg style="left:1556px;top:0px" width="14" height="14" viewBox="0 0 14 14"><path d="M14 0 H5.5 Q13 3 14 12 Z" fill="#111418"/></svg>
<svg style="left:0px;top:863px" width="6" height="10" viewBox="0 0 6 10"><path d="M0 0 H1 Q1.3 7 5 10 H0 Z" fill="#0d1720"/></svg>
<svg style="left:1564px;top:863px" width="6" height="10" viewBox="0 0 6 10"><path d="M6 2.5 Q5.5 7.5 3.5 10 H6 Z" fill="#111418"/></svg>
</div></div></body></html>
